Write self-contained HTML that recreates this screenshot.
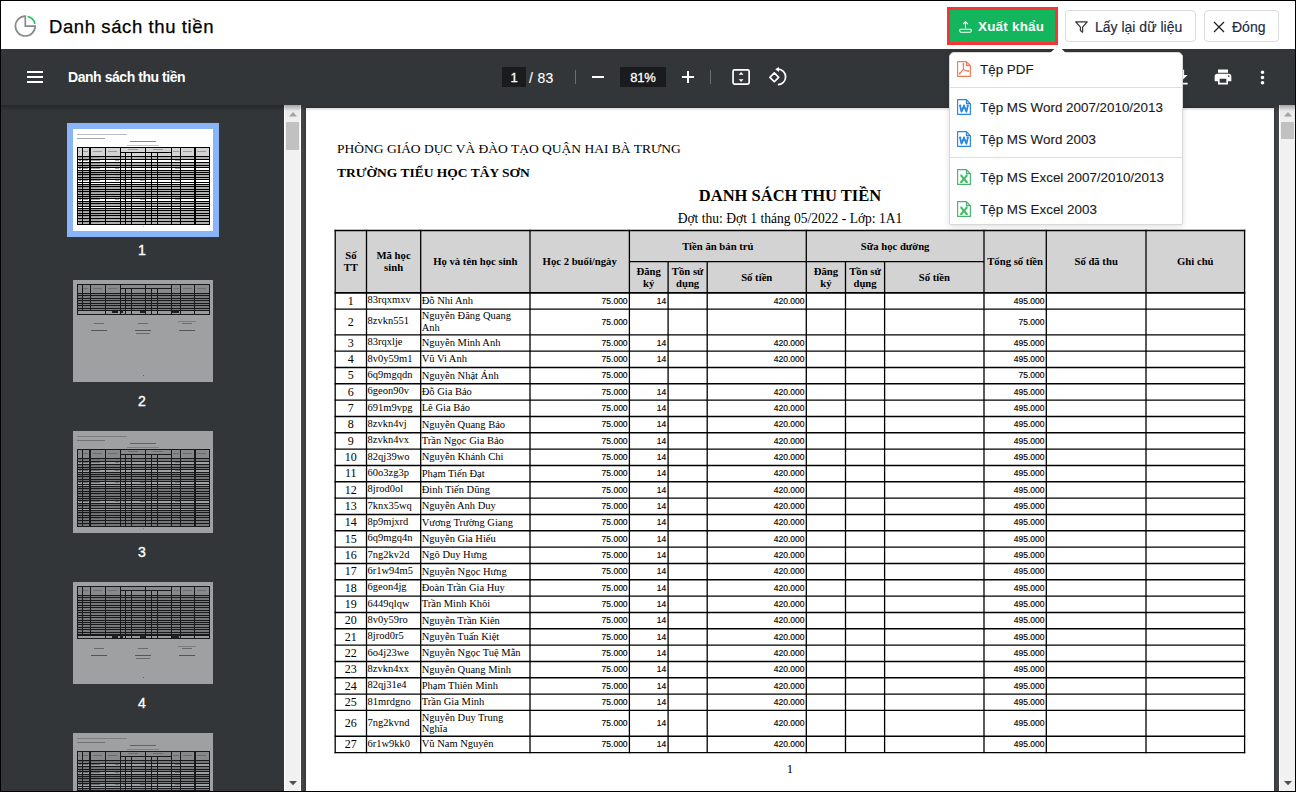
<!DOCTYPE html>
<html><head><meta charset="utf-8">
<style>
*{box-sizing:border-box;margin:0;padding:0}
html,body{width:1296px;height:792px;overflow:hidden;background:#fff}
body{position:relative;font-family:"Liberation Sans",sans-serif}
.abs{position:absolute}
#frame{position:absolute;left:0;top:0;width:1296px;height:792px;border:1px solid #000;z-index:50;pointer-events:none}
#hdr{position:absolute;left:1px;top:1px;width:1294px;height:48px;background:#fff}
#hdr .title{position:absolute;left:48px;top:14px;font-size:18.5px;letter-spacing:0.6px;color:#000;-webkit-text-stroke:0.25px #000;line-height:24px;white-space:nowrap}
.btn{position:absolute;top:10px;height:32px;border:1px solid #dcdcdc;border-radius:4px;background:#fff;color:#212121;font-size:14px;line-height:31px;white-space:nowrap;-webkit-text-stroke:0.15px #232a45}
#toolbar{position:absolute;left:1px;top:49px;width:1294px;height:56px;background:#323639;z-index:5}
#toolbar .t{position:absolute;color:#fff;white-space:nowrap}
#side{position:absolute;left:1px;top:105px;width:283px;height:686px;background:#323639}
#content{position:absolute;left:301px;top:105px;width:978px;height:686px;background:#434649}
#page{position:absolute;left:306px;top:108px;width:968px;height:683px;background:#fff;box-shadow:0 0 3px rgba(0,0,0,.5)}
#page div,.mini div,.thumb div{position:absolute}
.sb{position:absolute;background:#f1f1f1;border-left:1px solid #fff;border-right:1px solid #fff}
.th{display:flex;align-items:center;justify-content:center;text-align:center;font-family:"Liberation Serif",serif;font-weight:bold;font-size:10.7px;line-height:12px;color:#000}
.th.up{padding-bottom:2px}
.stt{display:flex;align-items:center;justify-content:center;padding-bottom:0.8px;font-family:"Liberation Serif",serif;font-size:12px;line-height:12px;color:#000}
.tl{display:flex;align-items:center;padding-left:1px;padding-bottom:0.8px;font-family:"Liberation Serif",serif;font-size:10.5px;line-height:10.6px;color:#000;white-space:nowrap}
.nr{display:flex;align-items:center;justify-content:flex-end;padding-right:1.8px;padding-bottom:0.8px;font-family:"Liberation Sans",sans-serif;font-size:8.5px;color:#000;white-space:nowrap;-webkit-text-stroke:0.15px #000}
.nm{line-height:11.3px}
.pt{font-family:"Liberation Serif",serif;color:#000;white-space:nowrap;line-height:1}
#dd{position:absolute;left:949px;top:52px;width:234px;height:173px;background:#fff;border:1px solid #d8d8d8;border-radius:5px 5px 2px 2px;box-shadow:0 2px 6px rgba(0,0,0,.12);z-index:20}
#dd .it{position:absolute;left:0;width:232px;height:32px;font-size:13.4px;color:#1a1a1a;white-space:nowrap;-webkit-text-stroke:0.1px #1a1a1a}
#dd .it span{position:absolute;left:30px;top:9px;line-height:16px}
#dd .it svg{position:absolute;left:7px;top:8px}
#dd .sep{position:absolute;left:0;width:232px;height:1px;background:#dddddd}
.thumb{position:absolute;left:72px;width:140px;height:102px;background:#fff;overflow:hidden}
.tlab{position:absolute;left:121px;width:40px;text-align:center;color:#fff;font-size:14px;line-height:14px;-webkit-text-stroke:0.35px #fff}
</style></head><body>
<div id="frame"></div>

<!-- HEADER -->
<div id="hdr">
  <svg class="abs" style="left:13px;top:13px" width="24" height="24" viewBox="0 0 24 24">
    <path d="M11.3 2.2 A9.9 9.9 0 1 0 21.2 12.1 L11.3 12.1 Z" fill="none" stroke="#8a8a8a" stroke-width="1.7"/>
    <path d="M13.6 2.5 A9.7 9.7 0 0 1 21 9.9" fill="none" stroke="#1cc45e" stroke-width="1.7"/>
  </svg>
  <div class="title">Danh sách thu tiền</div>
</div>

<!-- Export button -->
<div class="abs" style="left:947px;top:7px;width:111px;height:38px;background:#f73538;z-index:10"></div>
<div class="abs" style="left:950px;top:10px;width:105px;height:32px;background:#13b55d;z-index:11">
  <svg class="abs" style="left:8.5px;top:10.5px" width="13" height="12" viewBox="0 0 13 12">
    <path d="M6.5 0.8 L6.5 7.2 M4.2 3 L6.5 0.8 L8.8 3" fill="none" stroke="#fff" stroke-width="1.1"/>
    <path d="M1.2 8.2 H11.8 Q12.3 8.2 12.3 9.3 Q12.3 11.2 11.3 11.2 H1.7 Q0.7 11.2 0.7 9.3 Q0.7 8.2 1.2 8.2 Z" fill="none" stroke="#fff" stroke-width="1.1"/>
  </svg>
  <div class="abs" style="left:28px;top:8px;color:#fff;font-weight:bold;font-size:13.4px;line-height:18px;letter-spacing:0.25px;white-space:nowrap">Xuất khẩu</div>
</div>
<div class="btn" style="left:1065px;width:131px;z-index:10">
  <svg class="abs" style="left:9px;top:10px" width="13" height="12" viewBox="0 0 13 12">
    <path d="M0.8 0.8 H12.2 L7.6 6.2 V11.2 L5.4 9.6 V6.2 Z" fill="none" stroke="#333" stroke-width="1.2" stroke-linejoin="round"/>
  </svg>
  <span class="abs" style="left:29px;top:1px;color:#232a45">Lấy lại dữ liệu</span>
</div>
<div class="btn" style="left:1204px;width:75px;z-index:10">
  <svg class="abs" style="left:8px;top:10px" width="12" height="12" viewBox="0 0 12 12">
    <path d="M1 1 L11 11 M11 1 L1 11" fill="none" stroke="#222" stroke-width="1.3"/>
  </svg>
  <span class="abs" style="left:27px;top:1px;color:#232a45">Đóng</span>
</div>

<!-- TOOLBAR -->
<div id="toolbar">
  <div class="abs" style="left:26px;top:22px;width:16px;height:2px;background:#fff"></div>
  <div class="abs" style="left:26px;top:27px;width:16px;height:2px;background:#fff"></div>
  <div class="abs" style="left:26px;top:32px;width:16px;height:2px;background:#fff"></div>
  <div class="t" style="left:67px;top:19px;font-size:14px;font-weight:bold;letter-spacing:-0.45px;line-height:18px">Danh sách thu tiền</div>

  <div class="abs" style="left:501px;top:18px;width:24px;height:20px;background:#191b1c"></div>
  <div class="t" style="left:501px;top:20px;width:24px;text-align:center;font-size:13px;line-height:18px;-webkit-text-stroke:0.3px #fff">1</div>
  <div class="t" style="left:528px;top:20px;font-size:14px;line-height:18px;letter-spacing:0.3px;-webkit-text-stroke:0.1px #fff">/ 83</div>
  <div class="abs" style="left:574px;top:21px;width:1px;height:14px;background:#6d7073"></div>
  <div class="abs" style="left:591px;top:27px;width:12px;height:2px;background:#fff"></div>
  <div class="abs" style="left:619px;top:18px;width:46px;height:20px;background:#191b1c"></div>
  <div class="t" style="left:619px;top:20px;width:46px;text-align:center;font-size:13px;line-height:18px;letter-spacing:-0.2px;-webkit-text-stroke:0.3px #fff">81%</div>
  <div class="abs" style="left:681px;top:27px;width:12px;height:2px;background:#fff"></div>
  <div class="abs" style="left:686px;top:22px;width:2px;height:12px;background:#fff"></div>
  <div class="abs" style="left:709px;top:21px;width:1px;height:14px;background:#6d7073"></div>
  <svg class="abs" style="left:730px;top:19px" width="20" height="18" viewBox="0 0 20 18">
    <rect x="2.05" y="1.95" width="16.1" height="14.1" rx="1.6" fill="none" stroke="#fff" stroke-width="1.7"/>
    <path d="M10.1 3.9 L12.5 6.7 H7.7 Z M10.1 14.1 L12.5 11.3 H7.7 Z" fill="#fff"/>
  </svg>
  <svg class="abs" style="left:766px;top:17px" width="22" height="22" viewBox="0 0 22 22">
    <path d="M2.9 11.35 L7.3 6.95 L11.7 11.35 L7.3 15.75 Z" fill="none" stroke="#fff" stroke-width="1.7" stroke-linejoin="round"/>
    <path d="M10.9 3.2 A7.7 7.7 0 0 1 10.9 18.6" fill="none" stroke="#fff" stroke-width="1.7"/>
    <path d="M8.2 3.3 L11.9 0.9 L11.9 5.9 Z" fill="#fff"/>
  </svg>
  <!-- download (partly hidden) -->
  <svg class="abs" style="left:1170.4px;top:17.5px" width="21" height="21" viewBox="0 0 24 24"><path d="M19 9h-4V3H9v6H5l7 7 7-7zM5 18v2h14v-2H5z" fill="#fff"/></svg>
  <svg class="abs" style="left:1211.8px;top:18px" width="20" height="20" viewBox="0 0 24 24"><path d="M19 8H5c-1.66 0-3 1.34-3 3v6h4v4h12v-4h4v-6c0-1.660-1.34-3-3-3zm-3 11H8v-5h8v5zm3-7c-.55 0-1-.45-1-1s.45-1 1-1 1 .45 1 1-.45 1-1 1zm-1-9H6v4h12V3z" fill="#fff"/></svg>
  <svg class="abs" style="left:1250.8px;top:17.5px" width="21" height="21" viewBox="0 0 24 24"><path d="M12 8c1.1 0 2-.9 2-2s-.9-2-2-2-2 .9-2 2 .9 2 2 2zm0 2c-1.1 0-2 .9-2 2s.9 2 2 2 2-.9 2-2-.9-2-2-2zm0 6c-1.1 0-2 .9-2 2s.9 2 2 2 2-.9 2-2-.9-2-2-2z" fill="#fff"/></svg>
</div>

<!-- SIDEBAR -->
<div id="side">
<div class="abs" style="left:66px;top:18px;width:152px;height:114px;background:#8ab4f8"></div>
<div class="thumb" style="top:24px"><div style="left:4.48px;top:5.44px;width:49.32px;height:1.00px;background:#bdbdbd"></div><div style="left:4.48px;top:8.82px;width:27.62px;height:1.00px;background:#a6a6a6"></div><div style="left:56.84px;top:12.20px;width:26.32px;height:1.20px;background:#888"></div><div style="left:53.95px;top:15.73px;width:31.82px;height:1.00px;background:#c4c4c4"></div><div style="left:4.22px;top:18.01px;width:131.52px;height:9.16px;background:#d3d3d3"></div><div style="left:4.22px;top:27.17px;width:131.52px;height:2.40px;background:#b0b0b0"></div><div style="left:4.22px;top:33.34px;width:131.52px;height:2.40px;background:#b0b0b0"></div><div style="left:4.22px;top:35.74px;width:131.52px;height:2.40px;background:#b0b0b0"></div><div style="left:4.22px;top:40.55px;width:131.52px;height:2.40px;background:#b0b0b0"></div><div style="left:4.22px;top:42.95px;width:131.52px;height:2.40px;background:#b0b0b0"></div><div style="left:4.22px;top:45.35px;width:131.52px;height:2.40px;background:#b0b0b0"></div><div style="left:4.22px;top:47.75px;width:131.52px;height:2.40px;background:#b0b0b0"></div><div style="left:4.22px;top:54.95px;width:131.52px;height:2.40px;background:#b0b0b0"></div><div style="left:4.22px;top:57.35px;width:131.52px;height:2.40px;background:#b0b0b0"></div><div style="left:4.22px;top:59.75px;width:131.52px;height:2.40px;background:#b0b0b0"></div><div style="left:4.22px;top:62.15px;width:131.52px;height:2.40px;background:#b0b0b0"></div><div style="left:4.22px;top:64.55px;width:131.52px;height:2.40px;background:#b0b0b0"></div><div style="left:4.22px;top:66.95px;width:131.52px;height:2.40px;background:#b0b0b0"></div><div style="left:4.22px;top:71.75px;width:131.52px;height:2.40px;background:#b0b0b0"></div><div style="left:4.22px;top:74.15px;width:131.52px;height:2.40px;background:#b0b0b0"></div><div style="left:4.22px;top:78.95px;width:131.52px;height:2.40px;background:#b0b0b0"></div><div style="left:4.22px;top:81.35px;width:131.52px;height:2.40px;background:#b0b0b0"></div><div style="left:4.22px;top:83.75px;width:131.52px;height:2.40px;background:#b0b0b0"></div><div style="left:4.22px;top:86.16px;width:131.52px;height:2.40px;background:#b0b0b0"></div><div style="left:4.22px;top:88.56px;width:131.52px;height:3.81px;background:#b0b0b0"></div><div style="left:4.22px;top:92.36px;width:131.52px;height:2.40px;background:#b0b0b0"></div><div style="left:5.72px;top:22.20px;width:1.53px;height:1.30px;background:#9a9a9a"></div><div style="left:10.25px;top:22.20px;width:4.84px;height:1.30px;background:#9a9a9a"></div><div style="left:19.99px;top:22.20px;width:9.00px;height:1.30px;background:#9a9a9a"></div><div style="left:35.08px;top:22.20px;width:9.00px;height:1.30px;background:#9a9a9a"></div><div style="left:99.56px;top:22.20px;width:6.01px;height:1.30px;background:#9a9a9a"></div><div style="left:109.78px;top:22.20px;width:9.00px;height:1.30px;background:#9a9a9a"></div><div style="left:124.12px;top:22.20px;width:9.00px;height:1.30px;background:#9a9a9a"></div><div style="left:54.57px;top:19.99px;width:10.00px;height:1.20px;background:#9a9a9a"></div><div style="left:80.21px;top:19.99px;width:10.00px;height:1.20px;background:#9a9a9a"></div><div style="left:5.72px;top:27.87px;width:2.00px;height:1.20px;background:#888"></div><div style="left:9.25px;top:27.87px;width:6.00px;height:1.20px;background:#999"></div><div style="left:17.09px;top:27.87px;width:10.00px;height:1.20px;background:#999"></div><div style="left:42.27px;top:27.87px;width:4.00px;height:1.20px;background:#aaa"></div><div style="left:50.37px;top:27.87px;width:1.50px;height:1.20px;background:#aaa"></div><div style="left:67.36px;top:27.87px;width:4.50px;height:1.20px;background:#aaa"></div><div style="left:102.07px;top:27.87px;width:4.50px;height:1.20px;background:#aaa"></div><div style="left:5.72px;top:30.96px;width:2.00px;height:1.20px;background:#888"></div><div style="left:9.25px;top:30.96px;width:6.00px;height:1.20px;background:#999"></div><div style="left:17.09px;top:30.96px;width:10.00px;height:1.20px;background:#999"></div><div style="left:42.27px;top:30.96px;width:4.00px;height:1.20px;background:#aaa"></div><div style="left:102.07px;top:30.96px;width:4.50px;height:1.20px;background:#aaa"></div><div style="left:5.72px;top:34.04px;width:2.00px;height:1.20px;background:#888"></div><div style="left:9.25px;top:34.04px;width:6.00px;height:1.20px;background:#999"></div><div style="left:17.09px;top:34.04px;width:10.00px;height:1.20px;background:#999"></div><div style="left:42.27px;top:34.04px;width:4.00px;height:1.20px;background:#aaa"></div><div style="left:50.37px;top:34.04px;width:1.50px;height:1.20px;background:#aaa"></div><div style="left:67.36px;top:34.04px;width:4.50px;height:1.20px;background:#aaa"></div><div style="left:102.07px;top:34.04px;width:4.50px;height:1.20px;background:#aaa"></div><div style="left:5.72px;top:36.44px;width:2.00px;height:1.20px;background:#888"></div><div style="left:9.25px;top:36.44px;width:6.00px;height:1.20px;background:#999"></div><div style="left:17.09px;top:36.44px;width:10.00px;height:1.20px;background:#999"></div><div style="left:42.27px;top:36.44px;width:4.00px;height:1.20px;background:#aaa"></div><div style="left:50.37px;top:36.44px;width:1.50px;height:1.20px;background:#aaa"></div><div style="left:67.36px;top:36.44px;width:4.50px;height:1.20px;background:#aaa"></div><div style="left:102.07px;top:36.44px;width:4.50px;height:1.20px;background:#aaa"></div><div style="left:5.72px;top:38.85px;width:2.00px;height:1.20px;background:#888"></div><div style="left:9.25px;top:38.85px;width:6.00px;height:1.20px;background:#999"></div><div style="left:17.09px;top:38.85px;width:10.00px;height:1.20px;background:#999"></div><div style="left:42.27px;top:38.85px;width:4.00px;height:1.20px;background:#aaa"></div><div style="left:102.07px;top:38.85px;width:4.50px;height:1.20px;background:#aaa"></div><div style="left:5.72px;top:41.25px;width:2.00px;height:1.20px;background:#888"></div><div style="left:9.25px;top:41.25px;width:6.00px;height:1.20px;background:#999"></div><div style="left:17.09px;top:41.25px;width:10.00px;height:1.20px;background:#999"></div><div style="left:42.27px;top:41.25px;width:4.00px;height:1.20px;background:#aaa"></div><div style="left:50.37px;top:41.25px;width:1.50px;height:1.20px;background:#aaa"></div><div style="left:67.36px;top:41.25px;width:4.50px;height:1.20px;background:#aaa"></div><div style="left:102.07px;top:41.25px;width:4.50px;height:1.20px;background:#aaa"></div><div style="left:5.72px;top:43.65px;width:2.00px;height:1.20px;background:#888"></div><div style="left:9.25px;top:43.65px;width:6.00px;height:1.20px;background:#999"></div><div style="left:17.09px;top:43.65px;width:10.00px;height:1.20px;background:#999"></div><div style="left:42.27px;top:43.65px;width:4.00px;height:1.20px;background:#aaa"></div><div style="left:50.37px;top:43.65px;width:1.50px;height:1.20px;background:#aaa"></div><div style="left:67.36px;top:43.65px;width:4.50px;height:1.20px;background:#aaa"></div><div style="left:102.07px;top:43.65px;width:4.50px;height:1.20px;background:#aaa"></div><div style="left:5.72px;top:46.05px;width:2.00px;height:1.20px;background:#888"></div><div style="left:9.25px;top:46.05px;width:6.00px;height:1.20px;background:#999"></div><div style="left:17.09px;top:46.05px;width:10.00px;height:1.20px;background:#999"></div><div style="left:42.27px;top:46.05px;width:4.00px;height:1.20px;background:#aaa"></div><div style="left:50.37px;top:46.05px;width:1.50px;height:1.20px;background:#aaa"></div><div style="left:67.36px;top:46.05px;width:4.50px;height:1.20px;background:#aaa"></div><div style="left:102.07px;top:46.05px;width:4.50px;height:1.20px;background:#aaa"></div><div style="left:5.72px;top:48.45px;width:2.00px;height:1.20px;background:#888"></div><div style="left:9.25px;top:48.45px;width:6.00px;height:1.20px;background:#999"></div><div style="left:17.09px;top:48.45px;width:10.00px;height:1.20px;background:#999"></div><div style="left:42.27px;top:48.45px;width:4.00px;height:1.20px;background:#aaa"></div><div style="left:50.37px;top:48.45px;width:1.50px;height:1.20px;background:#aaa"></div><div style="left:67.36px;top:48.45px;width:4.50px;height:1.20px;background:#aaa"></div><div style="left:102.07px;top:48.45px;width:4.50px;height:1.20px;background:#aaa"></div><div style="left:5.72px;top:50.85px;width:2.00px;height:1.20px;background:#888"></div><div style="left:9.25px;top:50.85px;width:6.00px;height:1.20px;background:#999"></div><div style="left:17.09px;top:50.85px;width:10.00px;height:1.20px;background:#999"></div><div style="left:42.27px;top:50.85px;width:4.00px;height:1.20px;background:#aaa"></div><div style="left:50.37px;top:50.85px;width:1.50px;height:1.20px;background:#aaa"></div><div style="left:67.36px;top:50.85px;width:4.50px;height:1.20px;background:#aaa"></div><div style="left:102.07px;top:50.85px;width:4.50px;height:1.20px;background:#aaa"></div><div style="left:5.72px;top:53.25px;width:2.00px;height:1.20px;background:#888"></div><div style="left:9.25px;top:53.25px;width:6.00px;height:1.20px;background:#999"></div><div style="left:17.09px;top:53.25px;width:10.00px;height:1.20px;background:#999"></div><div style="left:42.27px;top:53.25px;width:4.00px;height:1.20px;background:#aaa"></div><div style="left:50.37px;top:53.25px;width:1.50px;height:1.20px;background:#aaa"></div><div style="left:67.36px;top:53.25px;width:4.50px;height:1.20px;background:#aaa"></div><div style="left:102.07px;top:53.25px;width:4.50px;height:1.20px;background:#aaa"></div><div style="left:5.72px;top:55.65px;width:2.00px;height:1.20px;background:#888"></div><div style="left:9.25px;top:55.65px;width:6.00px;height:1.20px;background:#999"></div><div style="left:17.09px;top:55.65px;width:10.00px;height:1.20px;background:#999"></div><div style="left:42.27px;top:55.65px;width:4.00px;height:1.20px;background:#aaa"></div><div style="left:50.37px;top:55.65px;width:1.50px;height:1.20px;background:#aaa"></div><div style="left:67.36px;top:55.65px;width:4.50px;height:1.20px;background:#aaa"></div><div style="left:102.07px;top:55.65px;width:4.50px;height:1.20px;background:#aaa"></div><div style="left:5.72px;top:58.05px;width:2.00px;height:1.20px;background:#888"></div><div style="left:9.25px;top:58.05px;width:6.00px;height:1.20px;background:#999"></div><div style="left:17.09px;top:58.05px;width:10.00px;height:1.20px;background:#999"></div><div style="left:42.27px;top:58.05px;width:4.00px;height:1.20px;background:#aaa"></div><div style="left:50.37px;top:58.05px;width:1.50px;height:1.20px;background:#aaa"></div><div style="left:67.36px;top:58.05px;width:4.50px;height:1.20px;background:#aaa"></div><div style="left:102.07px;top:58.05px;width:4.50px;height:1.20px;background:#aaa"></div><div style="left:5.72px;top:60.45px;width:2.00px;height:1.20px;background:#888"></div><div style="left:9.25px;top:60.45px;width:6.00px;height:1.20px;background:#999"></div><div style="left:17.09px;top:60.45px;width:10.00px;height:1.20px;background:#999"></div><div style="left:42.27px;top:60.45px;width:4.00px;height:1.20px;background:#aaa"></div><div style="left:50.37px;top:60.45px;width:1.50px;height:1.20px;background:#aaa"></div><div style="left:67.36px;top:60.45px;width:4.50px;height:1.20px;background:#aaa"></div><div style="left:102.07px;top:60.45px;width:4.50px;height:1.20px;background:#aaa"></div><div style="left:5.72px;top:62.85px;width:2.00px;height:1.20px;background:#888"></div><div style="left:9.25px;top:62.85px;width:6.00px;height:1.20px;background:#999"></div><div style="left:17.09px;top:62.85px;width:10.00px;height:1.20px;background:#999"></div><div style="left:42.27px;top:62.85px;width:4.00px;height:1.20px;background:#aaa"></div><div style="left:50.37px;top:62.85px;width:1.50px;height:1.20px;background:#aaa"></div><div style="left:67.36px;top:62.85px;width:4.50px;height:1.20px;background:#aaa"></div><div style="left:102.07px;top:62.85px;width:4.50px;height:1.20px;background:#aaa"></div><div style="left:5.72px;top:65.25px;width:2.00px;height:1.20px;background:#888"></div><div style="left:9.25px;top:65.25px;width:6.00px;height:1.20px;background:#999"></div><div style="left:17.09px;top:65.25px;width:10.00px;height:1.20px;background:#999"></div><div style="left:42.27px;top:65.25px;width:4.00px;height:1.20px;background:#aaa"></div><div style="left:50.37px;top:65.25px;width:1.50px;height:1.20px;background:#aaa"></div><div style="left:67.36px;top:65.25px;width:4.50px;height:1.20px;background:#aaa"></div><div style="left:102.07px;top:65.25px;width:4.50px;height:1.20px;background:#aaa"></div><div style="left:5.72px;top:67.65px;width:2.00px;height:1.20px;background:#888"></div><div style="left:9.25px;top:67.65px;width:6.00px;height:1.20px;background:#999"></div><div style="left:17.09px;top:67.65px;width:10.00px;height:1.20px;background:#999"></div><div style="left:42.27px;top:67.65px;width:4.00px;height:1.20px;background:#aaa"></div><div style="left:50.37px;top:67.65px;width:1.50px;height:1.20px;background:#aaa"></div><div style="left:67.36px;top:67.65px;width:4.50px;height:1.20px;background:#aaa"></div><div style="left:102.07px;top:67.65px;width:4.50px;height:1.20px;background:#aaa"></div><div style="left:5.72px;top:70.05px;width:2.00px;height:1.20px;background:#888"></div><div style="left:9.25px;top:70.05px;width:6.00px;height:1.20px;background:#999"></div><div style="left:17.09px;top:70.05px;width:10.00px;height:1.20px;background:#999"></div><div style="left:42.27px;top:70.05px;width:4.00px;height:1.20px;background:#aaa"></div><div style="left:50.37px;top:70.05px;width:1.50px;height:1.20px;background:#aaa"></div><div style="left:67.36px;top:70.05px;width:4.50px;height:1.20px;background:#aaa"></div><div style="left:102.07px;top:70.05px;width:4.50px;height:1.20px;background:#aaa"></div><div style="left:5.72px;top:72.45px;width:2.00px;height:1.20px;background:#888"></div><div style="left:9.25px;top:72.45px;width:6.00px;height:1.20px;background:#999"></div><div style="left:17.09px;top:72.45px;width:10.00px;height:1.20px;background:#999"></div><div style="left:42.27px;top:72.45px;width:4.00px;height:1.20px;background:#aaa"></div><div style="left:50.37px;top:72.45px;width:1.50px;height:1.20px;background:#aaa"></div><div style="left:67.36px;top:72.45px;width:4.50px;height:1.20px;background:#aaa"></div><div style="left:102.07px;top:72.45px;width:4.50px;height:1.20px;background:#aaa"></div><div style="left:5.72px;top:74.85px;width:2.00px;height:1.20px;background:#888"></div><div style="left:9.25px;top:74.85px;width:6.00px;height:1.20px;background:#999"></div><div style="left:17.09px;top:74.85px;width:10.00px;height:1.20px;background:#999"></div><div style="left:42.27px;top:74.85px;width:4.00px;height:1.20px;background:#aaa"></div><div style="left:50.37px;top:74.85px;width:1.50px;height:1.20px;background:#aaa"></div><div style="left:67.36px;top:74.85px;width:4.50px;height:1.20px;background:#aaa"></div><div style="left:102.07px;top:74.85px;width:4.50px;height:1.20px;background:#aaa"></div><div style="left:5.72px;top:77.25px;width:2.00px;height:1.20px;background:#888"></div><div style="left:9.25px;top:77.25px;width:6.00px;height:1.20px;background:#999"></div><div style="left:17.09px;top:77.25px;width:10.00px;height:1.20px;background:#999"></div><div style="left:42.27px;top:77.25px;width:4.00px;height:1.20px;background:#aaa"></div><div style="left:50.37px;top:77.25px;width:1.50px;height:1.20px;background:#aaa"></div><div style="left:67.36px;top:77.25px;width:4.50px;height:1.20px;background:#aaa"></div><div style="left:102.07px;top:77.25px;width:4.50px;height:1.20px;background:#aaa"></div><div style="left:5.72px;top:79.65px;width:2.00px;height:1.20px;background:#888"></div><div style="left:9.25px;top:79.65px;width:6.00px;height:1.20px;background:#999"></div><div style="left:17.09px;top:79.65px;width:10.00px;height:1.20px;background:#999"></div><div style="left:42.27px;top:79.65px;width:4.00px;height:1.20px;background:#aaa"></div><div style="left:50.37px;top:79.65px;width:1.50px;height:1.20px;background:#aaa"></div><div style="left:67.36px;top:79.65px;width:4.50px;height:1.20px;background:#aaa"></div><div style="left:102.07px;top:79.65px;width:4.50px;height:1.20px;background:#aaa"></div><div style="left:5.72px;top:82.05px;width:2.00px;height:1.20px;background:#888"></div><div style="left:9.25px;top:82.05px;width:6.00px;height:1.20px;background:#999"></div><div style="left:17.09px;top:82.05px;width:10.00px;height:1.20px;background:#999"></div><div style="left:42.27px;top:82.05px;width:4.00px;height:1.20px;background:#aaa"></div><div style="left:50.37px;top:82.05px;width:1.50px;height:1.20px;background:#aaa"></div><div style="left:67.36px;top:82.05px;width:4.50px;height:1.20px;background:#aaa"></div><div style="left:102.07px;top:82.05px;width:4.50px;height:1.20px;background:#aaa"></div><div style="left:5.72px;top:84.45px;width:2.00px;height:1.20px;background:#888"></div><div style="left:9.25px;top:84.45px;width:6.00px;height:1.20px;background:#999"></div><div style="left:17.09px;top:84.45px;width:10.00px;height:1.20px;background:#999"></div><div style="left:42.27px;top:84.45px;width:4.00px;height:1.20px;background:#aaa"></div><div style="left:50.37px;top:84.45px;width:1.50px;height:1.20px;background:#aaa"></div><div style="left:67.36px;top:84.45px;width:4.50px;height:1.20px;background:#aaa"></div><div style="left:102.07px;top:84.45px;width:4.50px;height:1.20px;background:#aaa"></div><div style="left:5.72px;top:86.86px;width:2.00px;height:1.20px;background:#888"></div><div style="left:9.25px;top:86.86px;width:6.00px;height:1.20px;background:#999"></div><div style="left:17.09px;top:86.86px;width:10.00px;height:1.20px;background:#999"></div><div style="left:42.27px;top:86.86px;width:4.00px;height:1.20px;background:#aaa"></div><div style="left:50.37px;top:86.86px;width:1.50px;height:1.20px;background:#aaa"></div><div style="left:67.36px;top:86.86px;width:4.50px;height:1.20px;background:#aaa"></div><div style="left:102.07px;top:86.86px;width:4.50px;height:1.20px;background:#aaa"></div><div style="left:5.72px;top:89.96px;width:2.00px;height:1.20px;background:#888"></div><div style="left:9.25px;top:89.96px;width:6.00px;height:1.20px;background:#999"></div><div style="left:17.09px;top:89.96px;width:10.00px;height:1.20px;background:#999"></div><div style="left:42.27px;top:89.96px;width:4.00px;height:1.20px;background:#aaa"></div><div style="left:50.37px;top:89.96px;width:1.50px;height:1.20px;background:#aaa"></div><div style="left:67.36px;top:89.96px;width:4.50px;height:1.20px;background:#aaa"></div><div style="left:102.07px;top:89.96px;width:4.50px;height:1.20px;background:#aaa"></div><div style="left:5.72px;top:93.06px;width:2.00px;height:1.20px;background:#888"></div><div style="left:9.25px;top:93.06px;width:6.00px;height:1.20px;background:#999"></div><div style="left:17.09px;top:93.06px;width:10.00px;height:1.20px;background:#999"></div><div style="left:42.27px;top:93.06px;width:4.00px;height:1.20px;background:#aaa"></div><div style="left:50.37px;top:93.06px;width:1.50px;height:1.20px;background:#aaa"></div><div style="left:67.36px;top:93.06px;width:4.50px;height:1.20px;background:#aaa"></div><div style="left:102.07px;top:93.06px;width:4.50px;height:1.20px;background:#aaa"></div><div style="left:4.22px;top:18.01px;width:132.52px;height:1.00px;background:#000"></div><div style="left:46.77px;top:22.59px;width:51.29px;height:1.00px;background:#000"></div><div style="left:4.22px;top:27.17px;width:132.52px;height:1.00px;background:#000"></div><div style="left:4.22px;top:29.57px;width:132.52px;height:1.00px;background:#000"></div><div style="left:4.22px;top:33.34px;width:132.52px;height:1.00px;background:#000"></div><div style="left:4.22px;top:35.74px;width:132.52px;height:1.00px;background:#000"></div><div style="left:4.22px;top:38.15px;width:132.52px;height:1.00px;background:#000"></div><div style="left:4.22px;top:40.55px;width:132.52px;height:1.00px;background:#000"></div><div style="left:4.22px;top:42.95px;width:132.52px;height:1.00px;background:#000"></div><div style="left:4.22px;top:45.35px;width:132.52px;height:1.00px;background:#000"></div><div style="left:4.22px;top:47.75px;width:132.52px;height:1.00px;background:#000"></div><div style="left:4.22px;top:50.15px;width:132.52px;height:1.00px;background:#000"></div><div style="left:4.22px;top:52.55px;width:132.52px;height:1.00px;background:#000"></div><div style="left:4.22px;top:54.95px;width:132.52px;height:1.00px;background:#000"></div><div style="left:4.22px;top:57.35px;width:132.52px;height:1.00px;background:#000"></div><div style="left:4.22px;top:59.75px;width:132.52px;height:1.00px;background:#000"></div><div style="left:4.22px;top:62.15px;width:132.52px;height:1.00px;background:#000"></div><div style="left:4.22px;top:64.55px;width:132.52px;height:1.00px;background:#000"></div><div style="left:4.22px;top:66.95px;width:132.52px;height:1.00px;background:#000"></div><div style="left:4.22px;top:69.35px;width:132.52px;height:1.00px;background:#000"></div><div style="left:4.22px;top:71.75px;width:132.52px;height:1.00px;background:#000"></div><div style="left:4.22px;top:74.15px;width:132.52px;height:1.00px;background:#000"></div><div style="left:4.22px;top:76.55px;width:132.52px;height:1.00px;background:#000"></div><div style="left:4.22px;top:78.95px;width:132.52px;height:1.00px;background:#000"></div><div style="left:4.22px;top:81.35px;width:132.52px;height:1.00px;background:#000"></div><div style="left:4.22px;top:83.75px;width:132.52px;height:1.00px;background:#000"></div><div style="left:4.22px;top:86.16px;width:132.52px;height:1.00px;background:#000"></div><div style="left:4.22px;top:88.56px;width:132.52px;height:1.00px;background:#000"></div><div style="left:4.22px;top:92.36px;width:132.52px;height:1.00px;background:#000"></div><div style="left:4.22px;top:94.76px;width:132.52px;height:1.00px;background:#000"></div><div style="left:4.12px;top:18.01px;width:1.20px;height:77.76px;background:#000"></div><div style="left:8.65px;top:18.01px;width:1.20px;height:77.76px;background:#000"></div><div style="left:16.49px;top:18.01px;width:1.20px;height:77.76px;background:#000"></div><div style="left:32.30px;top:18.01px;width:1.20px;height:77.76px;background:#000"></div><div style="left:46.67px;top:18.01px;width:1.20px;height:77.76px;background:#000"></div><div style="left:52.37px;top:22.59px;width:1.00px;height:73.17px;background:#000"></div><div style="left:58.02px;top:22.59px;width:1.00px;height:73.17px;background:#000"></div><div style="left:72.26px;top:18.01px;width:1.20px;height:77.76px;background:#000"></div><div style="left:78.03px;top:22.59px;width:1.00px;height:73.17px;background:#000"></div><div style="left:83.68px;top:22.59px;width:1.00px;height:73.17px;background:#000"></div><div style="left:97.96px;top:18.01px;width:1.20px;height:77.76px;background:#000"></div><div style="left:106.97px;top:18.01px;width:1.20px;height:77.76px;background:#000"></div><div style="left:121.39px;top:18.01px;width:1.20px;height:77.76px;background:#000"></div><div style="left:135.65px;top:18.01px;width:1.20px;height:77.76px;background:#000"></div><div style="left:69.71px;top:96.73px;width:1.00px;height:1.20px;background:#bbb"></div></div>
<div class="tlab" style="top:138px">1</div>
<div class="thumb" style="top:175px"><div style="left:4.22px;top:4.20px;width:131.52px;height:8.80px;background:#d3d3d3"></div><div style="left:4.22px;top:13.00px;width:131.52px;height:17.00px;background:#b4b4b4"></div><div style="left:4.22px;top:30.00px;width:131.52px;height:3.60px;background:#f4f4f4"></div><div style="left:10.25px;top:8.00px;width:4.84px;height:1.30px;background:#a0a0a0"></div><div style="left:19.99px;top:8.00px;width:9.00px;height:1.30px;background:#a0a0a0"></div><div style="left:35.08px;top:8.00px;width:9.00px;height:1.30px;background:#a0a0a0"></div><div style="left:99.56px;top:8.00px;width:6.01px;height:1.30px;background:#a0a0a0"></div><div style="left:109.78px;top:8.00px;width:9.00px;height:1.30px;background:#a0a0a0"></div><div style="left:124.12px;top:8.00px;width:9.00px;height:1.30px;background:#a0a0a0"></div><div style="left:4.22px;top:13.00px;width:132.52px;height:1.00px;background:#000"></div><div style="left:4.22px;top:15.45px;width:132.52px;height:1.00px;background:#000"></div><div style="left:4.22px;top:17.90px;width:132.52px;height:1.00px;background:#000"></div><div style="left:4.22px;top:20.35px;width:132.52px;height:1.00px;background:#000"></div><div style="left:4.22px;top:22.80px;width:132.52px;height:1.00px;background:#000"></div><div style="left:4.22px;top:25.25px;width:132.52px;height:1.00px;background:#000"></div><div style="left:4.22px;top:27.70px;width:132.52px;height:1.00px;background:#000"></div><div style="left:4.22px;top:4.20px;width:132.52px;height:1.00px;background:#000"></div><div style="left:4.22px;top:30.00px;width:132.52px;height:1.00px;background:#000"></div><div style="left:4.22px;top:33.60px;width:132.52px;height:1.00px;background:#000"></div><div style="left:46.77px;top:8.20px;width:51.29px;height:1.00px;background:#000"></div><div style="left:4.22px;top:4.20px;width:1.00px;height:30.40px;background:#000"></div><div style="left:8.75px;top:4.20px;width:1.00px;height:25.80px;background:#000"></div><div style="left:16.59px;top:4.20px;width:1.00px;height:25.80px;background:#000"></div><div style="left:32.40px;top:4.20px;width:1.00px;height:30.40px;background:#000"></div><div style="left:46.77px;top:4.20px;width:1.00px;height:30.40px;background:#000"></div><div style="left:52.37px;top:8.20px;width:1.00px;height:26.40px;background:#000"></div><div style="left:58.02px;top:8.20px;width:1.00px;height:26.40px;background:#000"></div><div style="left:72.36px;top:4.20px;width:1.00px;height:30.40px;background:#000"></div><div style="left:78.03px;top:8.20px;width:1.00px;height:26.40px;background:#000"></div><div style="left:83.68px;top:8.20px;width:1.00px;height:26.40px;background:#000"></div><div style="left:98.06px;top:4.20px;width:1.00px;height:30.40px;background:#000"></div><div style="left:107.07px;top:4.20px;width:1.00px;height:30.40px;background:#000"></div><div style="left:121.49px;top:4.20px;width:1.00px;height:30.40px;background:#000"></div><div style="left:135.75px;top:4.20px;width:1.00px;height:30.40px;background:#000"></div><div style="left:39.40px;top:30.60px;width:6.00px;height:2.80px;background:#111"></div><div style="left:47.27px;top:30.60px;width:3.00px;height:2.80px;background:#111"></div><div style="left:67.02px;top:30.60px;width:5.00px;height:2.80px;background:#111"></div><div style="left:98.56px;top:30.60px;width:7.00px;height:2.80px;background:#111"></div><div style="left:21.20px;top:43.40px;width:10.00px;height:1.00px;background:#9a9a9a"></div><div style="left:18.20px;top:50.00px;width:16.00px;height:1.00px;background:#707070"></div><div style="left:65.00px;top:43.40px;width:10.00px;height:1.00px;background:#9a9a9a"></div><div style="left:62.00px;top:50.00px;width:16.00px;height:1.00px;background:#707070"></div><div style="left:109.00px;top:43.40px;width:10.00px;height:1.00px;background:#9a9a9a"></div><div style="left:106.00px;top:50.00px;width:16.00px;height:1.00px;background:#707070"></div><div style="left:63.00px;top:53.00px;width:14.00px;height:0.80px;background:#999"></div><div style="left:105.00px;top:40.60px;width:18.00px;height:0.60px;background:#bbb"></div><div style="left:69.50px;top:94.50px;width:1.00px;height:1.00px;background:#777"></div><div style="left:0;top:0;width:140px;height:102px;background:rgba(50,54,57,.47)"></div></div>
<div class="tlab" style="top:289px">2</div>
<div class="thumb" style="top:326px"><div style="left:4.48px;top:5.44px;width:49.32px;height:1.00px;background:#bdbdbd"></div><div style="left:4.48px;top:8.82px;width:27.62px;height:1.00px;background:#a6a6a6"></div><div style="left:56.84px;top:12.20px;width:26.32px;height:1.20px;background:#888"></div><div style="left:53.95px;top:15.73px;width:31.82px;height:1.00px;background:#c4c4c4"></div><div style="left:4.22px;top:18.01px;width:131.52px;height:9.16px;background:#d3d3d3"></div><div style="left:4.22px;top:27.17px;width:131.52px;height:2.40px;background:#b0b0b0"></div><div style="left:4.22px;top:33.34px;width:131.52px;height:2.40px;background:#b0b0b0"></div><div style="left:4.22px;top:35.74px;width:131.52px;height:2.40px;background:#b0b0b0"></div><div style="left:4.22px;top:40.55px;width:131.52px;height:2.40px;background:#b0b0b0"></div><div style="left:4.22px;top:42.95px;width:131.52px;height:2.40px;background:#b0b0b0"></div><div style="left:4.22px;top:45.35px;width:131.52px;height:2.40px;background:#b0b0b0"></div><div style="left:4.22px;top:47.75px;width:131.52px;height:2.40px;background:#b0b0b0"></div><div style="left:4.22px;top:54.95px;width:131.52px;height:2.40px;background:#b0b0b0"></div><div style="left:4.22px;top:57.35px;width:131.52px;height:2.40px;background:#b0b0b0"></div><div style="left:4.22px;top:59.75px;width:131.52px;height:2.40px;background:#b0b0b0"></div><div style="left:4.22px;top:62.15px;width:131.52px;height:2.40px;background:#b0b0b0"></div><div style="left:4.22px;top:64.55px;width:131.52px;height:2.40px;background:#b0b0b0"></div><div style="left:4.22px;top:66.95px;width:131.52px;height:2.40px;background:#b0b0b0"></div><div style="left:4.22px;top:71.75px;width:131.52px;height:2.40px;background:#b0b0b0"></div><div style="left:4.22px;top:74.15px;width:131.52px;height:2.40px;background:#b0b0b0"></div><div style="left:4.22px;top:78.95px;width:131.52px;height:2.40px;background:#b0b0b0"></div><div style="left:4.22px;top:81.35px;width:131.52px;height:2.40px;background:#b0b0b0"></div><div style="left:4.22px;top:83.75px;width:131.52px;height:2.40px;background:#b0b0b0"></div><div style="left:4.22px;top:86.16px;width:131.52px;height:2.40px;background:#b0b0b0"></div><div style="left:4.22px;top:88.56px;width:131.52px;height:3.81px;background:#b0b0b0"></div><div style="left:4.22px;top:92.36px;width:131.52px;height:2.40px;background:#b0b0b0"></div><div style="left:5.72px;top:22.20px;width:1.53px;height:1.30px;background:#9a9a9a"></div><div style="left:10.25px;top:22.20px;width:4.84px;height:1.30px;background:#9a9a9a"></div><div style="left:19.99px;top:22.20px;width:9.00px;height:1.30px;background:#9a9a9a"></div><div style="left:35.08px;top:22.20px;width:9.00px;height:1.30px;background:#9a9a9a"></div><div style="left:99.56px;top:22.20px;width:6.01px;height:1.30px;background:#9a9a9a"></div><div style="left:109.78px;top:22.20px;width:9.00px;height:1.30px;background:#9a9a9a"></div><div style="left:124.12px;top:22.20px;width:9.00px;height:1.30px;background:#9a9a9a"></div><div style="left:54.57px;top:19.99px;width:10.00px;height:1.20px;background:#9a9a9a"></div><div style="left:80.21px;top:19.99px;width:10.00px;height:1.20px;background:#9a9a9a"></div><div style="left:5.72px;top:27.87px;width:2.00px;height:1.20px;background:#888"></div><div style="left:9.25px;top:27.87px;width:6.00px;height:1.20px;background:#999"></div><div style="left:17.09px;top:27.87px;width:10.00px;height:1.20px;background:#999"></div><div style="left:42.27px;top:27.87px;width:4.00px;height:1.20px;background:#aaa"></div><div style="left:50.37px;top:27.87px;width:1.50px;height:1.20px;background:#aaa"></div><div style="left:67.36px;top:27.87px;width:4.50px;height:1.20px;background:#aaa"></div><div style="left:102.07px;top:27.87px;width:4.50px;height:1.20px;background:#aaa"></div><div style="left:5.72px;top:30.96px;width:2.00px;height:1.20px;background:#888"></div><div style="left:9.25px;top:30.96px;width:6.00px;height:1.20px;background:#999"></div><div style="left:17.09px;top:30.96px;width:10.00px;height:1.20px;background:#999"></div><div style="left:42.27px;top:30.96px;width:4.00px;height:1.20px;background:#aaa"></div><div style="left:102.07px;top:30.96px;width:4.50px;height:1.20px;background:#aaa"></div><div style="left:5.72px;top:34.04px;width:2.00px;height:1.20px;background:#888"></div><div style="left:9.25px;top:34.04px;width:6.00px;height:1.20px;background:#999"></div><div style="left:17.09px;top:34.04px;width:10.00px;height:1.20px;background:#999"></div><div style="left:42.27px;top:34.04px;width:4.00px;height:1.20px;background:#aaa"></div><div style="left:50.37px;top:34.04px;width:1.50px;height:1.20px;background:#aaa"></div><div style="left:67.36px;top:34.04px;width:4.50px;height:1.20px;background:#aaa"></div><div style="left:102.07px;top:34.04px;width:4.50px;height:1.20px;background:#aaa"></div><div style="left:5.72px;top:36.44px;width:2.00px;height:1.20px;background:#888"></div><div style="left:9.25px;top:36.44px;width:6.00px;height:1.20px;background:#999"></div><div style="left:17.09px;top:36.44px;width:10.00px;height:1.20px;background:#999"></div><div style="left:42.27px;top:36.44px;width:4.00px;height:1.20px;background:#aaa"></div><div style="left:50.37px;top:36.44px;width:1.50px;height:1.20px;background:#aaa"></div><div style="left:67.36px;top:36.44px;width:4.50px;height:1.20px;background:#aaa"></div><div style="left:102.07px;top:36.44px;width:4.50px;height:1.20px;background:#aaa"></div><div style="left:5.72px;top:38.85px;width:2.00px;height:1.20px;background:#888"></div><div style="left:9.25px;top:38.85px;width:6.00px;height:1.20px;background:#999"></div><div style="left:17.09px;top:38.85px;width:10.00px;height:1.20px;background:#999"></div><div style="left:42.27px;top:38.85px;width:4.00px;height:1.20px;background:#aaa"></div><div style="left:102.07px;top:38.85px;width:4.50px;height:1.20px;background:#aaa"></div><div style="left:5.72px;top:41.25px;width:2.00px;height:1.20px;background:#888"></div><div style="left:9.25px;top:41.25px;width:6.00px;height:1.20px;background:#999"></div><div style="left:17.09px;top:41.25px;width:10.00px;height:1.20px;background:#999"></div><div style="left:42.27px;top:41.25px;width:4.00px;height:1.20px;background:#aaa"></div><div style="left:50.37px;top:41.25px;width:1.50px;height:1.20px;background:#aaa"></div><div style="left:67.36px;top:41.25px;width:4.50px;height:1.20px;background:#aaa"></div><div style="left:102.07px;top:41.25px;width:4.50px;height:1.20px;background:#aaa"></div><div style="left:5.72px;top:43.65px;width:2.00px;height:1.20px;background:#888"></div><div style="left:9.25px;top:43.65px;width:6.00px;height:1.20px;background:#999"></div><div style="left:17.09px;top:43.65px;width:10.00px;height:1.20px;background:#999"></div><div style="left:42.27px;top:43.65px;width:4.00px;height:1.20px;background:#aaa"></div><div style="left:50.37px;top:43.65px;width:1.50px;height:1.20px;background:#aaa"></div><div style="left:67.36px;top:43.65px;width:4.50px;height:1.20px;background:#aaa"></div><div style="left:102.07px;top:43.65px;width:4.50px;height:1.20px;background:#aaa"></div><div style="left:5.72px;top:46.05px;width:2.00px;height:1.20px;background:#888"></div><div style="left:9.25px;top:46.05px;width:6.00px;height:1.20px;background:#999"></div><div style="left:17.09px;top:46.05px;width:10.00px;height:1.20px;background:#999"></div><div style="left:42.27px;top:46.05px;width:4.00px;height:1.20px;background:#aaa"></div><div style="left:50.37px;top:46.05px;width:1.50px;height:1.20px;background:#aaa"></div><div style="left:67.36px;top:46.05px;width:4.50px;height:1.20px;background:#aaa"></div><div style="left:102.07px;top:46.05px;width:4.50px;height:1.20px;background:#aaa"></div><div style="left:5.72px;top:48.45px;width:2.00px;height:1.20px;background:#888"></div><div style="left:9.25px;top:48.45px;width:6.00px;height:1.20px;background:#999"></div><div style="left:17.09px;top:48.45px;width:10.00px;height:1.20px;background:#999"></div><div style="left:42.27px;top:48.45px;width:4.00px;height:1.20px;background:#aaa"></div><div style="left:50.37px;top:48.45px;width:1.50px;height:1.20px;background:#aaa"></div><div style="left:67.36px;top:48.45px;width:4.50px;height:1.20px;background:#aaa"></div><div style="left:102.07px;top:48.45px;width:4.50px;height:1.20px;background:#aaa"></div><div style="left:5.72px;top:50.85px;width:2.00px;height:1.20px;background:#888"></div><div style="left:9.25px;top:50.85px;width:6.00px;height:1.20px;background:#999"></div><div style="left:17.09px;top:50.85px;width:10.00px;height:1.20px;background:#999"></div><div style="left:42.27px;top:50.85px;width:4.00px;height:1.20px;background:#aaa"></div><div style="left:50.37px;top:50.85px;width:1.50px;height:1.20px;background:#aaa"></div><div style="left:67.36px;top:50.85px;width:4.50px;height:1.20px;background:#aaa"></div><div style="left:102.07px;top:50.85px;width:4.50px;height:1.20px;background:#aaa"></div><div style="left:5.72px;top:53.25px;width:2.00px;height:1.20px;background:#888"></div><div style="left:9.25px;top:53.25px;width:6.00px;height:1.20px;background:#999"></div><div style="left:17.09px;top:53.25px;width:10.00px;height:1.20px;background:#999"></div><div style="left:42.27px;top:53.25px;width:4.00px;height:1.20px;background:#aaa"></div><div style="left:50.37px;top:53.25px;width:1.50px;height:1.20px;background:#aaa"></div><div style="left:67.36px;top:53.25px;width:4.50px;height:1.20px;background:#aaa"></div><div style="left:102.07px;top:53.25px;width:4.50px;height:1.20px;background:#aaa"></div><div style="left:5.72px;top:55.65px;width:2.00px;height:1.20px;background:#888"></div><div style="left:9.25px;top:55.65px;width:6.00px;height:1.20px;background:#999"></div><div style="left:17.09px;top:55.65px;width:10.00px;height:1.20px;background:#999"></div><div style="left:42.27px;top:55.65px;width:4.00px;height:1.20px;background:#aaa"></div><div style="left:50.37px;top:55.65px;width:1.50px;height:1.20px;background:#aaa"></div><div style="left:67.36px;top:55.65px;width:4.50px;height:1.20px;background:#aaa"></div><div style="left:102.07px;top:55.65px;width:4.50px;height:1.20px;background:#aaa"></div><div style="left:5.72px;top:58.05px;width:2.00px;height:1.20px;background:#888"></div><div style="left:9.25px;top:58.05px;width:6.00px;height:1.20px;background:#999"></div><div style="left:17.09px;top:58.05px;width:10.00px;height:1.20px;background:#999"></div><div style="left:42.27px;top:58.05px;width:4.00px;height:1.20px;background:#aaa"></div><div style="left:50.37px;top:58.05px;width:1.50px;height:1.20px;background:#aaa"></div><div style="left:67.36px;top:58.05px;width:4.50px;height:1.20px;background:#aaa"></div><div style="left:102.07px;top:58.05px;width:4.50px;height:1.20px;background:#aaa"></div><div style="left:5.72px;top:60.45px;width:2.00px;height:1.20px;background:#888"></div><div style="left:9.25px;top:60.45px;width:6.00px;height:1.20px;background:#999"></div><div style="left:17.09px;top:60.45px;width:10.00px;height:1.20px;background:#999"></div><div style="left:42.27px;top:60.45px;width:4.00px;height:1.20px;background:#aaa"></div><div style="left:50.37px;top:60.45px;width:1.50px;height:1.20px;background:#aaa"></div><div style="left:67.36px;top:60.45px;width:4.50px;height:1.20px;background:#aaa"></div><div style="left:102.07px;top:60.45px;width:4.50px;height:1.20px;background:#aaa"></div><div style="left:5.72px;top:62.85px;width:2.00px;height:1.20px;background:#888"></div><div style="left:9.25px;top:62.85px;width:6.00px;height:1.20px;background:#999"></div><div style="left:17.09px;top:62.85px;width:10.00px;height:1.20px;background:#999"></div><div style="left:42.27px;top:62.85px;width:4.00px;height:1.20px;background:#aaa"></div><div style="left:50.37px;top:62.85px;width:1.50px;height:1.20px;background:#aaa"></div><div style="left:67.36px;top:62.85px;width:4.50px;height:1.20px;background:#aaa"></div><div style="left:102.07px;top:62.85px;width:4.50px;height:1.20px;background:#aaa"></div><div style="left:5.72px;top:65.25px;width:2.00px;height:1.20px;background:#888"></div><div style="left:9.25px;top:65.25px;width:6.00px;height:1.20px;background:#999"></div><div style="left:17.09px;top:65.25px;width:10.00px;height:1.20px;background:#999"></div><div style="left:42.27px;top:65.25px;width:4.00px;height:1.20px;background:#aaa"></div><div style="left:50.37px;top:65.25px;width:1.50px;height:1.20px;background:#aaa"></div><div style="left:67.36px;top:65.25px;width:4.50px;height:1.20px;background:#aaa"></div><div style="left:102.07px;top:65.25px;width:4.50px;height:1.20px;background:#aaa"></div><div style="left:5.72px;top:67.65px;width:2.00px;height:1.20px;background:#888"></div><div style="left:9.25px;top:67.65px;width:6.00px;height:1.20px;background:#999"></div><div style="left:17.09px;top:67.65px;width:10.00px;height:1.20px;background:#999"></div><div style="left:42.27px;top:67.65px;width:4.00px;height:1.20px;background:#aaa"></div><div style="left:50.37px;top:67.65px;width:1.50px;height:1.20px;background:#aaa"></div><div style="left:67.36px;top:67.65px;width:4.50px;height:1.20px;background:#aaa"></div><div style="left:102.07px;top:67.65px;width:4.50px;height:1.20px;background:#aaa"></div><div style="left:5.72px;top:70.05px;width:2.00px;height:1.20px;background:#888"></div><div style="left:9.25px;top:70.05px;width:6.00px;height:1.20px;background:#999"></div><div style="left:17.09px;top:70.05px;width:10.00px;height:1.20px;background:#999"></div><div style="left:42.27px;top:70.05px;width:4.00px;height:1.20px;background:#aaa"></div><div style="left:50.37px;top:70.05px;width:1.50px;height:1.20px;background:#aaa"></div><div style="left:67.36px;top:70.05px;width:4.50px;height:1.20px;background:#aaa"></div><div style="left:102.07px;top:70.05px;width:4.50px;height:1.20px;background:#aaa"></div><div style="left:5.72px;top:72.45px;width:2.00px;height:1.20px;background:#888"></div><div style="left:9.25px;top:72.45px;width:6.00px;height:1.20px;background:#999"></div><div style="left:17.09px;top:72.45px;width:10.00px;height:1.20px;background:#999"></div><div style="left:42.27px;top:72.45px;width:4.00px;height:1.20px;background:#aaa"></div><div style="left:50.37px;top:72.45px;width:1.50px;height:1.20px;background:#aaa"></div><div style="left:67.36px;top:72.45px;width:4.50px;height:1.20px;background:#aaa"></div><div style="left:102.07px;top:72.45px;width:4.50px;height:1.20px;background:#aaa"></div><div style="left:5.72px;top:74.85px;width:2.00px;height:1.20px;background:#888"></div><div style="left:9.25px;top:74.85px;width:6.00px;height:1.20px;background:#999"></div><div style="left:17.09px;top:74.85px;width:10.00px;height:1.20px;background:#999"></div><div style="left:42.27px;top:74.85px;width:4.00px;height:1.20px;background:#aaa"></div><div style="left:50.37px;top:74.85px;width:1.50px;height:1.20px;background:#aaa"></div><div style="left:67.36px;top:74.85px;width:4.50px;height:1.20px;background:#aaa"></div><div style="left:102.07px;top:74.85px;width:4.50px;height:1.20px;background:#aaa"></div><div style="left:5.72px;top:77.25px;width:2.00px;height:1.20px;background:#888"></div><div style="left:9.25px;top:77.25px;width:6.00px;height:1.20px;background:#999"></div><div style="left:17.09px;top:77.25px;width:10.00px;height:1.20px;background:#999"></div><div style="left:42.27px;top:77.25px;width:4.00px;height:1.20px;background:#aaa"></div><div style="left:50.37px;top:77.25px;width:1.50px;height:1.20px;background:#aaa"></div><div style="left:67.36px;top:77.25px;width:4.50px;height:1.20px;background:#aaa"></div><div style="left:102.07px;top:77.25px;width:4.50px;height:1.20px;background:#aaa"></div><div style="left:5.72px;top:79.65px;width:2.00px;height:1.20px;background:#888"></div><div style="left:9.25px;top:79.65px;width:6.00px;height:1.20px;background:#999"></div><div style="left:17.09px;top:79.65px;width:10.00px;height:1.20px;background:#999"></div><div style="left:42.27px;top:79.65px;width:4.00px;height:1.20px;background:#aaa"></div><div style="left:50.37px;top:79.65px;width:1.50px;height:1.20px;background:#aaa"></div><div style="left:67.36px;top:79.65px;width:4.50px;height:1.20px;background:#aaa"></div><div style="left:102.07px;top:79.65px;width:4.50px;height:1.20px;background:#aaa"></div><div style="left:5.72px;top:82.05px;width:2.00px;height:1.20px;background:#888"></div><div style="left:9.25px;top:82.05px;width:6.00px;height:1.20px;background:#999"></div><div style="left:17.09px;top:82.05px;width:10.00px;height:1.20px;background:#999"></div><div style="left:42.27px;top:82.05px;width:4.00px;height:1.20px;background:#aaa"></div><div style="left:50.37px;top:82.05px;width:1.50px;height:1.20px;background:#aaa"></div><div style="left:67.36px;top:82.05px;width:4.50px;height:1.20px;background:#aaa"></div><div style="left:102.07px;top:82.05px;width:4.50px;height:1.20px;background:#aaa"></div><div style="left:5.72px;top:84.45px;width:2.00px;height:1.20px;background:#888"></div><div style="left:9.25px;top:84.45px;width:6.00px;height:1.20px;background:#999"></div><div style="left:17.09px;top:84.45px;width:10.00px;height:1.20px;background:#999"></div><div style="left:42.27px;top:84.45px;width:4.00px;height:1.20px;background:#aaa"></div><div style="left:50.37px;top:84.45px;width:1.50px;height:1.20px;background:#aaa"></div><div style="left:67.36px;top:84.45px;width:4.50px;height:1.20px;background:#aaa"></div><div style="left:102.07px;top:84.45px;width:4.50px;height:1.20px;background:#aaa"></div><div style="left:5.72px;top:86.86px;width:2.00px;height:1.20px;background:#888"></div><div style="left:9.25px;top:86.86px;width:6.00px;height:1.20px;background:#999"></div><div style="left:17.09px;top:86.86px;width:10.00px;height:1.20px;background:#999"></div><div style="left:42.27px;top:86.86px;width:4.00px;height:1.20px;background:#aaa"></div><div style="left:50.37px;top:86.86px;width:1.50px;height:1.20px;background:#aaa"></div><div style="left:67.36px;top:86.86px;width:4.50px;height:1.20px;background:#aaa"></div><div style="left:102.07px;top:86.86px;width:4.50px;height:1.20px;background:#aaa"></div><div style="left:5.72px;top:89.96px;width:2.00px;height:1.20px;background:#888"></div><div style="left:9.25px;top:89.96px;width:6.00px;height:1.20px;background:#999"></div><div style="left:17.09px;top:89.96px;width:10.00px;height:1.20px;background:#999"></div><div style="left:42.27px;top:89.96px;width:4.00px;height:1.20px;background:#aaa"></div><div style="left:50.37px;top:89.96px;width:1.50px;height:1.20px;background:#aaa"></div><div style="left:67.36px;top:89.96px;width:4.50px;height:1.20px;background:#aaa"></div><div style="left:102.07px;top:89.96px;width:4.50px;height:1.20px;background:#aaa"></div><div style="left:5.72px;top:93.06px;width:2.00px;height:1.20px;background:#888"></div><div style="left:9.25px;top:93.06px;width:6.00px;height:1.20px;background:#999"></div><div style="left:17.09px;top:93.06px;width:10.00px;height:1.20px;background:#999"></div><div style="left:42.27px;top:93.06px;width:4.00px;height:1.20px;background:#aaa"></div><div style="left:50.37px;top:93.06px;width:1.50px;height:1.20px;background:#aaa"></div><div style="left:67.36px;top:93.06px;width:4.50px;height:1.20px;background:#aaa"></div><div style="left:102.07px;top:93.06px;width:4.50px;height:1.20px;background:#aaa"></div><div style="left:4.22px;top:18.01px;width:132.52px;height:1.00px;background:#000"></div><div style="left:46.77px;top:22.59px;width:51.29px;height:1.00px;background:#000"></div><div style="left:4.22px;top:27.17px;width:132.52px;height:1.00px;background:#000"></div><div style="left:4.22px;top:29.57px;width:132.52px;height:1.00px;background:#000"></div><div style="left:4.22px;top:33.34px;width:132.52px;height:1.00px;background:#000"></div><div style="left:4.22px;top:35.74px;width:132.52px;height:1.00px;background:#000"></div><div style="left:4.22px;top:38.15px;width:132.52px;height:1.00px;background:#000"></div><div style="left:4.22px;top:40.55px;width:132.52px;height:1.00px;background:#000"></div><div style="left:4.22px;top:42.95px;width:132.52px;height:1.00px;background:#000"></div><div style="left:4.22px;top:45.35px;width:132.52px;height:1.00px;background:#000"></div><div style="left:4.22px;top:47.75px;width:132.52px;height:1.00px;background:#000"></div><div style="left:4.22px;top:50.15px;width:132.52px;height:1.00px;background:#000"></div><div style="left:4.22px;top:52.55px;width:132.52px;height:1.00px;background:#000"></div><div style="left:4.22px;top:54.95px;width:132.52px;height:1.00px;background:#000"></div><div style="left:4.22px;top:57.35px;width:132.52px;height:1.00px;background:#000"></div><div style="left:4.22px;top:59.75px;width:132.52px;height:1.00px;background:#000"></div><div style="left:4.22px;top:62.15px;width:132.52px;height:1.00px;background:#000"></div><div style="left:4.22px;top:64.55px;width:132.52px;height:1.00px;background:#000"></div><div style="left:4.22px;top:66.95px;width:132.52px;height:1.00px;background:#000"></div><div style="left:4.22px;top:69.35px;width:132.52px;height:1.00px;background:#000"></div><div style="left:4.22px;top:71.75px;width:132.52px;height:1.00px;background:#000"></div><div style="left:4.22px;top:74.15px;width:132.52px;height:1.00px;background:#000"></div><div style="left:4.22px;top:76.55px;width:132.52px;height:1.00px;background:#000"></div><div style="left:4.22px;top:78.95px;width:132.52px;height:1.00px;background:#000"></div><div style="left:4.22px;top:81.35px;width:132.52px;height:1.00px;background:#000"></div><div style="left:4.22px;top:83.75px;width:132.52px;height:1.00px;background:#000"></div><div style="left:4.22px;top:86.16px;width:132.52px;height:1.00px;background:#000"></div><div style="left:4.22px;top:88.56px;width:132.52px;height:1.00px;background:#000"></div><div style="left:4.22px;top:92.36px;width:132.52px;height:1.00px;background:#000"></div><div style="left:4.22px;top:94.76px;width:132.52px;height:1.00px;background:#000"></div><div style="left:4.12px;top:18.01px;width:1.20px;height:77.76px;background:#000"></div><div style="left:8.65px;top:18.01px;width:1.20px;height:77.76px;background:#000"></div><div style="left:16.49px;top:18.01px;width:1.20px;height:77.76px;background:#000"></div><div style="left:32.30px;top:18.01px;width:1.20px;height:77.76px;background:#000"></div><div style="left:46.67px;top:18.01px;width:1.20px;height:77.76px;background:#000"></div><div style="left:52.37px;top:22.59px;width:1.00px;height:73.17px;background:#000"></div><div style="left:58.02px;top:22.59px;width:1.00px;height:73.17px;background:#000"></div><div style="left:72.26px;top:18.01px;width:1.20px;height:77.76px;background:#000"></div><div style="left:78.03px;top:22.59px;width:1.00px;height:73.17px;background:#000"></div><div style="left:83.68px;top:22.59px;width:1.00px;height:73.17px;background:#000"></div><div style="left:97.96px;top:18.01px;width:1.20px;height:77.76px;background:#000"></div><div style="left:106.97px;top:18.01px;width:1.20px;height:77.76px;background:#000"></div><div style="left:121.39px;top:18.01px;width:1.20px;height:77.76px;background:#000"></div><div style="left:135.65px;top:18.01px;width:1.20px;height:77.76px;background:#000"></div><div style="left:69.71px;top:96.73px;width:1.00px;height:1.20px;background:#bbb"></div><div style="left:0;top:0;width:140px;height:102px;background:rgba(50,54,57,.47)"></div></div>
<div class="tlab" style="top:440px">3</div>
<div class="thumb" style="top:477px"><div style="left:4.22px;top:4.20px;width:131.52px;height:8.80px;background:#d3d3d3"></div><div style="left:4.22px;top:13.00px;width:131.52px;height:39.80px;background:#b4b4b4"></div><div style="left:4.22px;top:52.80px;width:131.52px;height:3.60px;background:#f4f4f4"></div><div style="left:10.25px;top:8.00px;width:4.84px;height:1.30px;background:#a0a0a0"></div><div style="left:19.99px;top:8.00px;width:9.00px;height:1.30px;background:#a0a0a0"></div><div style="left:35.08px;top:8.00px;width:9.00px;height:1.30px;background:#a0a0a0"></div><div style="left:99.56px;top:8.00px;width:6.01px;height:1.30px;background:#a0a0a0"></div><div style="left:109.78px;top:8.00px;width:9.00px;height:1.30px;background:#a0a0a0"></div><div style="left:124.12px;top:8.00px;width:9.00px;height:1.30px;background:#a0a0a0"></div><div style="left:4.22px;top:13.00px;width:132.52px;height:1.00px;background:#000"></div><div style="left:4.22px;top:15.45px;width:132.52px;height:1.00px;background:#000"></div><div style="left:4.22px;top:17.90px;width:132.52px;height:1.00px;background:#000"></div><div style="left:4.22px;top:20.35px;width:132.52px;height:1.00px;background:#000"></div><div style="left:4.22px;top:22.80px;width:132.52px;height:1.00px;background:#000"></div><div style="left:4.22px;top:25.25px;width:132.52px;height:1.00px;background:#000"></div><div style="left:4.22px;top:27.70px;width:132.52px;height:1.00px;background:#000"></div><div style="left:4.22px;top:30.15px;width:132.52px;height:1.00px;background:#000"></div><div style="left:4.22px;top:32.60px;width:132.52px;height:1.00px;background:#000"></div><div style="left:4.22px;top:35.05px;width:132.52px;height:1.00px;background:#000"></div><div style="left:4.22px;top:37.50px;width:132.52px;height:1.00px;background:#000"></div><div style="left:4.22px;top:39.95px;width:132.52px;height:1.00px;background:#000"></div><div style="left:4.22px;top:42.40px;width:132.52px;height:1.00px;background:#000"></div><div style="left:4.22px;top:44.85px;width:132.52px;height:1.00px;background:#000"></div><div style="left:4.22px;top:47.30px;width:132.52px;height:1.00px;background:#000"></div><div style="left:4.22px;top:49.75px;width:132.52px;height:1.00px;background:#000"></div><div style="left:4.22px;top:52.20px;width:132.52px;height:1.00px;background:#000"></div><div style="left:4.22px;top:4.20px;width:132.52px;height:1.00px;background:#000"></div><div style="left:4.22px;top:52.80px;width:132.52px;height:1.00px;background:#000"></div><div style="left:4.22px;top:56.40px;width:132.52px;height:1.00px;background:#000"></div><div style="left:46.77px;top:8.20px;width:51.29px;height:1.00px;background:#000"></div><div style="left:4.22px;top:4.20px;width:1.00px;height:53.20px;background:#000"></div><div style="left:8.75px;top:4.20px;width:1.00px;height:48.60px;background:#000"></div><div style="left:16.59px;top:4.20px;width:1.00px;height:48.60px;background:#000"></div><div style="left:32.40px;top:4.20px;width:1.00px;height:53.20px;background:#000"></div><div style="left:46.77px;top:4.20px;width:1.00px;height:53.20px;background:#000"></div><div style="left:52.37px;top:8.20px;width:1.00px;height:49.20px;background:#000"></div><div style="left:58.02px;top:8.20px;width:1.00px;height:49.20px;background:#000"></div><div style="left:72.36px;top:4.20px;width:1.00px;height:53.20px;background:#000"></div><div style="left:78.03px;top:8.20px;width:1.00px;height:49.20px;background:#000"></div><div style="left:83.68px;top:8.20px;width:1.00px;height:49.20px;background:#000"></div><div style="left:98.06px;top:4.20px;width:1.00px;height:53.20px;background:#000"></div><div style="left:107.07px;top:4.20px;width:1.00px;height:53.20px;background:#000"></div><div style="left:121.49px;top:4.20px;width:1.00px;height:53.20px;background:#000"></div><div style="left:135.75px;top:4.20px;width:1.00px;height:53.20px;background:#000"></div><div style="left:39.40px;top:53.40px;width:6.00px;height:2.80px;background:#111"></div><div style="left:47.27px;top:53.40px;width:3.00px;height:2.80px;background:#111"></div><div style="left:67.02px;top:53.40px;width:5.00px;height:2.80px;background:#111"></div><div style="left:98.56px;top:53.40px;width:7.00px;height:2.80px;background:#111"></div><div style="left:21.20px;top:66.30px;width:10.00px;height:1.00px;background:#9a9a9a"></div><div style="left:18.20px;top:72.90px;width:16.00px;height:1.00px;background:#707070"></div><div style="left:65.00px;top:66.30px;width:10.00px;height:1.00px;background:#9a9a9a"></div><div style="left:62.00px;top:72.90px;width:16.00px;height:1.00px;background:#707070"></div><div style="left:109.00px;top:66.30px;width:10.00px;height:1.00px;background:#9a9a9a"></div><div style="left:106.00px;top:72.90px;width:16.00px;height:1.00px;background:#707070"></div><div style="left:63.00px;top:75.90px;width:14.00px;height:0.80px;background:#999"></div><div style="left:105.00px;top:63.50px;width:18.00px;height:0.60px;background:#bbb"></div><div style="left:69.50px;top:94.50px;width:1.00px;height:1.00px;background:#777"></div><div style="left:0;top:0;width:140px;height:102px;background:rgba(50,54,57,.47)"></div></div>
<div class="tlab" style="top:591px">4</div>
<div class="thumb" style="top:628px"><div style="left:4.48px;top:5.44px;width:49.32px;height:1.00px;background:#bdbdbd"></div><div style="left:4.48px;top:8.82px;width:27.62px;height:1.00px;background:#a6a6a6"></div><div style="left:56.84px;top:12.20px;width:26.32px;height:1.20px;background:#888"></div><div style="left:53.95px;top:15.73px;width:31.82px;height:1.00px;background:#c4c4c4"></div><div style="left:4.22px;top:18.01px;width:131.52px;height:9.16px;background:#d3d3d3"></div><div style="left:4.22px;top:27.17px;width:131.52px;height:2.40px;background:#b0b0b0"></div><div style="left:4.22px;top:33.34px;width:131.52px;height:2.40px;background:#b0b0b0"></div><div style="left:4.22px;top:35.74px;width:131.52px;height:2.40px;background:#b0b0b0"></div><div style="left:4.22px;top:40.55px;width:131.52px;height:2.40px;background:#b0b0b0"></div><div style="left:4.22px;top:42.95px;width:131.52px;height:2.40px;background:#b0b0b0"></div><div style="left:4.22px;top:45.35px;width:131.52px;height:2.40px;background:#b0b0b0"></div><div style="left:4.22px;top:47.75px;width:131.52px;height:2.40px;background:#b0b0b0"></div><div style="left:4.22px;top:54.95px;width:131.52px;height:2.40px;background:#b0b0b0"></div><div style="left:4.22px;top:57.35px;width:131.52px;height:2.40px;background:#b0b0b0"></div><div style="left:4.22px;top:59.75px;width:131.52px;height:2.40px;background:#b0b0b0"></div><div style="left:4.22px;top:62.15px;width:131.52px;height:2.40px;background:#b0b0b0"></div><div style="left:4.22px;top:64.55px;width:131.52px;height:2.40px;background:#b0b0b0"></div><div style="left:4.22px;top:66.95px;width:131.52px;height:2.40px;background:#b0b0b0"></div><div style="left:4.22px;top:71.75px;width:131.52px;height:2.40px;background:#b0b0b0"></div><div style="left:4.22px;top:74.15px;width:131.52px;height:2.40px;background:#b0b0b0"></div><div style="left:4.22px;top:78.95px;width:131.52px;height:2.40px;background:#b0b0b0"></div><div style="left:4.22px;top:81.35px;width:131.52px;height:2.40px;background:#b0b0b0"></div><div style="left:4.22px;top:83.75px;width:131.52px;height:2.40px;background:#b0b0b0"></div><div style="left:4.22px;top:86.16px;width:131.52px;height:2.40px;background:#b0b0b0"></div><div style="left:4.22px;top:88.56px;width:131.52px;height:3.81px;background:#b0b0b0"></div><div style="left:4.22px;top:92.36px;width:131.52px;height:2.40px;background:#b0b0b0"></div><div style="left:5.72px;top:22.20px;width:1.53px;height:1.30px;background:#9a9a9a"></div><div style="left:10.25px;top:22.20px;width:4.84px;height:1.30px;background:#9a9a9a"></div><div style="left:19.99px;top:22.20px;width:9.00px;height:1.30px;background:#9a9a9a"></div><div style="left:35.08px;top:22.20px;width:9.00px;height:1.30px;background:#9a9a9a"></div><div style="left:99.56px;top:22.20px;width:6.01px;height:1.30px;background:#9a9a9a"></div><div style="left:109.78px;top:22.20px;width:9.00px;height:1.30px;background:#9a9a9a"></div><div style="left:124.12px;top:22.20px;width:9.00px;height:1.30px;background:#9a9a9a"></div><div style="left:54.57px;top:19.99px;width:10.00px;height:1.20px;background:#9a9a9a"></div><div style="left:80.21px;top:19.99px;width:10.00px;height:1.20px;background:#9a9a9a"></div><div style="left:5.72px;top:27.87px;width:2.00px;height:1.20px;background:#888"></div><div style="left:9.25px;top:27.87px;width:6.00px;height:1.20px;background:#999"></div><div style="left:17.09px;top:27.87px;width:10.00px;height:1.20px;background:#999"></div><div style="left:42.27px;top:27.87px;width:4.00px;height:1.20px;background:#aaa"></div><div style="left:50.37px;top:27.87px;width:1.50px;height:1.20px;background:#aaa"></div><div style="left:67.36px;top:27.87px;width:4.50px;height:1.20px;background:#aaa"></div><div style="left:102.07px;top:27.87px;width:4.50px;height:1.20px;background:#aaa"></div><div style="left:5.72px;top:30.96px;width:2.00px;height:1.20px;background:#888"></div><div style="left:9.25px;top:30.96px;width:6.00px;height:1.20px;background:#999"></div><div style="left:17.09px;top:30.96px;width:10.00px;height:1.20px;background:#999"></div><div style="left:42.27px;top:30.96px;width:4.00px;height:1.20px;background:#aaa"></div><div style="left:102.07px;top:30.96px;width:4.50px;height:1.20px;background:#aaa"></div><div style="left:5.72px;top:34.04px;width:2.00px;height:1.20px;background:#888"></div><div style="left:9.25px;top:34.04px;width:6.00px;height:1.20px;background:#999"></div><div style="left:17.09px;top:34.04px;width:10.00px;height:1.20px;background:#999"></div><div style="left:42.27px;top:34.04px;width:4.00px;height:1.20px;background:#aaa"></div><div style="left:50.37px;top:34.04px;width:1.50px;height:1.20px;background:#aaa"></div><div style="left:67.36px;top:34.04px;width:4.50px;height:1.20px;background:#aaa"></div><div style="left:102.07px;top:34.04px;width:4.50px;height:1.20px;background:#aaa"></div><div style="left:5.72px;top:36.44px;width:2.00px;height:1.20px;background:#888"></div><div style="left:9.25px;top:36.44px;width:6.00px;height:1.20px;background:#999"></div><div style="left:17.09px;top:36.44px;width:10.00px;height:1.20px;background:#999"></div><div style="left:42.27px;top:36.44px;width:4.00px;height:1.20px;background:#aaa"></div><div style="left:50.37px;top:36.44px;width:1.50px;height:1.20px;background:#aaa"></div><div style="left:67.36px;top:36.44px;width:4.50px;height:1.20px;background:#aaa"></div><div style="left:102.07px;top:36.44px;width:4.50px;height:1.20px;background:#aaa"></div><div style="left:5.72px;top:38.85px;width:2.00px;height:1.20px;background:#888"></div><div style="left:9.25px;top:38.85px;width:6.00px;height:1.20px;background:#999"></div><div style="left:17.09px;top:38.85px;width:10.00px;height:1.20px;background:#999"></div><div style="left:42.27px;top:38.85px;width:4.00px;height:1.20px;background:#aaa"></div><div style="left:102.07px;top:38.85px;width:4.50px;height:1.20px;background:#aaa"></div><div style="left:5.72px;top:41.25px;width:2.00px;height:1.20px;background:#888"></div><div style="left:9.25px;top:41.25px;width:6.00px;height:1.20px;background:#999"></div><div style="left:17.09px;top:41.25px;width:10.00px;height:1.20px;background:#999"></div><div style="left:42.27px;top:41.25px;width:4.00px;height:1.20px;background:#aaa"></div><div style="left:50.37px;top:41.25px;width:1.50px;height:1.20px;background:#aaa"></div><div style="left:67.36px;top:41.25px;width:4.50px;height:1.20px;background:#aaa"></div><div style="left:102.07px;top:41.25px;width:4.50px;height:1.20px;background:#aaa"></div><div style="left:5.72px;top:43.65px;width:2.00px;height:1.20px;background:#888"></div><div style="left:9.25px;top:43.65px;width:6.00px;height:1.20px;background:#999"></div><div style="left:17.09px;top:43.65px;width:10.00px;height:1.20px;background:#999"></div><div style="left:42.27px;top:43.65px;width:4.00px;height:1.20px;background:#aaa"></div><div style="left:50.37px;top:43.65px;width:1.50px;height:1.20px;background:#aaa"></div><div style="left:67.36px;top:43.65px;width:4.50px;height:1.20px;background:#aaa"></div><div style="left:102.07px;top:43.65px;width:4.50px;height:1.20px;background:#aaa"></div><div style="left:5.72px;top:46.05px;width:2.00px;height:1.20px;background:#888"></div><div style="left:9.25px;top:46.05px;width:6.00px;height:1.20px;background:#999"></div><div style="left:17.09px;top:46.05px;width:10.00px;height:1.20px;background:#999"></div><div style="left:42.27px;top:46.05px;width:4.00px;height:1.20px;background:#aaa"></div><div style="left:50.37px;top:46.05px;width:1.50px;height:1.20px;background:#aaa"></div><div style="left:67.36px;top:46.05px;width:4.50px;height:1.20px;background:#aaa"></div><div style="left:102.07px;top:46.05px;width:4.50px;height:1.20px;background:#aaa"></div><div style="left:5.72px;top:48.45px;width:2.00px;height:1.20px;background:#888"></div><div style="left:9.25px;top:48.45px;width:6.00px;height:1.20px;background:#999"></div><div style="left:17.09px;top:48.45px;width:10.00px;height:1.20px;background:#999"></div><div style="left:42.27px;top:48.45px;width:4.00px;height:1.20px;background:#aaa"></div><div style="left:50.37px;top:48.45px;width:1.50px;height:1.20px;background:#aaa"></div><div style="left:67.36px;top:48.45px;width:4.50px;height:1.20px;background:#aaa"></div><div style="left:102.07px;top:48.45px;width:4.50px;height:1.20px;background:#aaa"></div><div style="left:5.72px;top:50.85px;width:2.00px;height:1.20px;background:#888"></div><div style="left:9.25px;top:50.85px;width:6.00px;height:1.20px;background:#999"></div><div style="left:17.09px;top:50.85px;width:10.00px;height:1.20px;background:#999"></div><div style="left:42.27px;top:50.85px;width:4.00px;height:1.20px;background:#aaa"></div><div style="left:50.37px;top:50.85px;width:1.50px;height:1.20px;background:#aaa"></div><div style="left:67.36px;top:50.85px;width:4.50px;height:1.20px;background:#aaa"></div><div style="left:102.07px;top:50.85px;width:4.50px;height:1.20px;background:#aaa"></div><div style="left:5.72px;top:53.25px;width:2.00px;height:1.20px;background:#888"></div><div style="left:9.25px;top:53.25px;width:6.00px;height:1.20px;background:#999"></div><div style="left:17.09px;top:53.25px;width:10.00px;height:1.20px;background:#999"></div><div style="left:42.27px;top:53.25px;width:4.00px;height:1.20px;background:#aaa"></div><div style="left:50.37px;top:53.25px;width:1.50px;height:1.20px;background:#aaa"></div><div style="left:67.36px;top:53.25px;width:4.50px;height:1.20px;background:#aaa"></div><div style="left:102.07px;top:53.25px;width:4.50px;height:1.20px;background:#aaa"></div><div style="left:5.72px;top:55.65px;width:2.00px;height:1.20px;background:#888"></div><div style="left:9.25px;top:55.65px;width:6.00px;height:1.20px;background:#999"></div><div style="left:17.09px;top:55.65px;width:10.00px;height:1.20px;background:#999"></div><div style="left:42.27px;top:55.65px;width:4.00px;height:1.20px;background:#aaa"></div><div style="left:50.37px;top:55.65px;width:1.50px;height:1.20px;background:#aaa"></div><div style="left:67.36px;top:55.65px;width:4.50px;height:1.20px;background:#aaa"></div><div style="left:102.07px;top:55.65px;width:4.50px;height:1.20px;background:#aaa"></div><div style="left:5.72px;top:58.05px;width:2.00px;height:1.20px;background:#888"></div><div style="left:9.25px;top:58.05px;width:6.00px;height:1.20px;background:#999"></div><div style="left:17.09px;top:58.05px;width:10.00px;height:1.20px;background:#999"></div><div style="left:42.27px;top:58.05px;width:4.00px;height:1.20px;background:#aaa"></div><div style="left:50.37px;top:58.05px;width:1.50px;height:1.20px;background:#aaa"></div><div style="left:67.36px;top:58.05px;width:4.50px;height:1.20px;background:#aaa"></div><div style="left:102.07px;top:58.05px;width:4.50px;height:1.20px;background:#aaa"></div><div style="left:5.72px;top:60.45px;width:2.00px;height:1.20px;background:#888"></div><div style="left:9.25px;top:60.45px;width:6.00px;height:1.20px;background:#999"></div><div style="left:17.09px;top:60.45px;width:10.00px;height:1.20px;background:#999"></div><div style="left:42.27px;top:60.45px;width:4.00px;height:1.20px;background:#aaa"></div><div style="left:50.37px;top:60.45px;width:1.50px;height:1.20px;background:#aaa"></div><div style="left:67.36px;top:60.45px;width:4.50px;height:1.20px;background:#aaa"></div><div style="left:102.07px;top:60.45px;width:4.50px;height:1.20px;background:#aaa"></div><div style="left:5.72px;top:62.85px;width:2.00px;height:1.20px;background:#888"></div><div style="left:9.25px;top:62.85px;width:6.00px;height:1.20px;background:#999"></div><div style="left:17.09px;top:62.85px;width:10.00px;height:1.20px;background:#999"></div><div style="left:42.27px;top:62.85px;width:4.00px;height:1.20px;background:#aaa"></div><div style="left:50.37px;top:62.85px;width:1.50px;height:1.20px;background:#aaa"></div><div style="left:67.36px;top:62.85px;width:4.50px;height:1.20px;background:#aaa"></div><div style="left:102.07px;top:62.85px;width:4.50px;height:1.20px;background:#aaa"></div><div style="left:5.72px;top:65.25px;width:2.00px;height:1.20px;background:#888"></div><div style="left:9.25px;top:65.25px;width:6.00px;height:1.20px;background:#999"></div><div style="left:17.09px;top:65.25px;width:10.00px;height:1.20px;background:#999"></div><div style="left:42.27px;top:65.25px;width:4.00px;height:1.20px;background:#aaa"></div><div style="left:50.37px;top:65.25px;width:1.50px;height:1.20px;background:#aaa"></div><div style="left:67.36px;top:65.25px;width:4.50px;height:1.20px;background:#aaa"></div><div style="left:102.07px;top:65.25px;width:4.50px;height:1.20px;background:#aaa"></div><div style="left:5.72px;top:67.65px;width:2.00px;height:1.20px;background:#888"></div><div style="left:9.25px;top:67.65px;width:6.00px;height:1.20px;background:#999"></div><div style="left:17.09px;top:67.65px;width:10.00px;height:1.20px;background:#999"></div><div style="left:42.27px;top:67.65px;width:4.00px;height:1.20px;background:#aaa"></div><div style="left:50.37px;top:67.65px;width:1.50px;height:1.20px;background:#aaa"></div><div style="left:67.36px;top:67.65px;width:4.50px;height:1.20px;background:#aaa"></div><div style="left:102.07px;top:67.65px;width:4.50px;height:1.20px;background:#aaa"></div><div style="left:5.72px;top:70.05px;width:2.00px;height:1.20px;background:#888"></div><div style="left:9.25px;top:70.05px;width:6.00px;height:1.20px;background:#999"></div><div style="left:17.09px;top:70.05px;width:10.00px;height:1.20px;background:#999"></div><div style="left:42.27px;top:70.05px;width:4.00px;height:1.20px;background:#aaa"></div><div style="left:50.37px;top:70.05px;width:1.50px;height:1.20px;background:#aaa"></div><div style="left:67.36px;top:70.05px;width:4.50px;height:1.20px;background:#aaa"></div><div style="left:102.07px;top:70.05px;width:4.50px;height:1.20px;background:#aaa"></div><div style="left:5.72px;top:72.45px;width:2.00px;height:1.20px;background:#888"></div><div style="left:9.25px;top:72.45px;width:6.00px;height:1.20px;background:#999"></div><div style="left:17.09px;top:72.45px;width:10.00px;height:1.20px;background:#999"></div><div style="left:42.27px;top:72.45px;width:4.00px;height:1.20px;background:#aaa"></div><div style="left:50.37px;top:72.45px;width:1.50px;height:1.20px;background:#aaa"></div><div style="left:67.36px;top:72.45px;width:4.50px;height:1.20px;background:#aaa"></div><div style="left:102.07px;top:72.45px;width:4.50px;height:1.20px;background:#aaa"></div><div style="left:5.72px;top:74.85px;width:2.00px;height:1.20px;background:#888"></div><div style="left:9.25px;top:74.85px;width:6.00px;height:1.20px;background:#999"></div><div style="left:17.09px;top:74.85px;width:10.00px;height:1.20px;background:#999"></div><div style="left:42.27px;top:74.85px;width:4.00px;height:1.20px;background:#aaa"></div><div style="left:50.37px;top:74.85px;width:1.50px;height:1.20px;background:#aaa"></div><div style="left:67.36px;top:74.85px;width:4.50px;height:1.20px;background:#aaa"></div><div style="left:102.07px;top:74.85px;width:4.50px;height:1.20px;background:#aaa"></div><div style="left:5.72px;top:77.25px;width:2.00px;height:1.20px;background:#888"></div><div style="left:9.25px;top:77.25px;width:6.00px;height:1.20px;background:#999"></div><div style="left:17.09px;top:77.25px;width:10.00px;height:1.20px;background:#999"></div><div style="left:42.27px;top:77.25px;width:4.00px;height:1.20px;background:#aaa"></div><div style="left:50.37px;top:77.25px;width:1.50px;height:1.20px;background:#aaa"></div><div style="left:67.36px;top:77.25px;width:4.50px;height:1.20px;background:#aaa"></div><div style="left:102.07px;top:77.25px;width:4.50px;height:1.20px;background:#aaa"></div><div style="left:5.72px;top:79.65px;width:2.00px;height:1.20px;background:#888"></div><div style="left:9.25px;top:79.65px;width:6.00px;height:1.20px;background:#999"></div><div style="left:17.09px;top:79.65px;width:10.00px;height:1.20px;background:#999"></div><div style="left:42.27px;top:79.65px;width:4.00px;height:1.20px;background:#aaa"></div><div style="left:50.37px;top:79.65px;width:1.50px;height:1.20px;background:#aaa"></div><div style="left:67.36px;top:79.65px;width:4.50px;height:1.20px;background:#aaa"></div><div style="left:102.07px;top:79.65px;width:4.50px;height:1.20px;background:#aaa"></div><div style="left:5.72px;top:82.05px;width:2.00px;height:1.20px;background:#888"></div><div style="left:9.25px;top:82.05px;width:6.00px;height:1.20px;background:#999"></div><div style="left:17.09px;top:82.05px;width:10.00px;height:1.20px;background:#999"></div><div style="left:42.27px;top:82.05px;width:4.00px;height:1.20px;background:#aaa"></div><div style="left:50.37px;top:82.05px;width:1.50px;height:1.20px;background:#aaa"></div><div style="left:67.36px;top:82.05px;width:4.50px;height:1.20px;background:#aaa"></div><div style="left:102.07px;top:82.05px;width:4.50px;height:1.20px;background:#aaa"></div><div style="left:5.72px;top:84.45px;width:2.00px;height:1.20px;background:#888"></div><div style="left:9.25px;top:84.45px;width:6.00px;height:1.20px;background:#999"></div><div style="left:17.09px;top:84.45px;width:10.00px;height:1.20px;background:#999"></div><div style="left:42.27px;top:84.45px;width:4.00px;height:1.20px;background:#aaa"></div><div style="left:50.37px;top:84.45px;width:1.50px;height:1.20px;background:#aaa"></div><div style="left:67.36px;top:84.45px;width:4.50px;height:1.20px;background:#aaa"></div><div style="left:102.07px;top:84.45px;width:4.50px;height:1.20px;background:#aaa"></div><div style="left:5.72px;top:86.86px;width:2.00px;height:1.20px;background:#888"></div><div style="left:9.25px;top:86.86px;width:6.00px;height:1.20px;background:#999"></div><div style="left:17.09px;top:86.86px;width:10.00px;height:1.20px;background:#999"></div><div style="left:42.27px;top:86.86px;width:4.00px;height:1.20px;background:#aaa"></div><div style="left:50.37px;top:86.86px;width:1.50px;height:1.20px;background:#aaa"></div><div style="left:67.36px;top:86.86px;width:4.50px;height:1.20px;background:#aaa"></div><div style="left:102.07px;top:86.86px;width:4.50px;height:1.20px;background:#aaa"></div><div style="left:5.72px;top:89.96px;width:2.00px;height:1.20px;background:#888"></div><div style="left:9.25px;top:89.96px;width:6.00px;height:1.20px;background:#999"></div><div style="left:17.09px;top:89.96px;width:10.00px;height:1.20px;background:#999"></div><div style="left:42.27px;top:89.96px;width:4.00px;height:1.20px;background:#aaa"></div><div style="left:50.37px;top:89.96px;width:1.50px;height:1.20px;background:#aaa"></div><div style="left:67.36px;top:89.96px;width:4.50px;height:1.20px;background:#aaa"></div><div style="left:102.07px;top:89.96px;width:4.50px;height:1.20px;background:#aaa"></div><div style="left:5.72px;top:93.06px;width:2.00px;height:1.20px;background:#888"></div><div style="left:9.25px;top:93.06px;width:6.00px;height:1.20px;background:#999"></div><div style="left:17.09px;top:93.06px;width:10.00px;height:1.20px;background:#999"></div><div style="left:42.27px;top:93.06px;width:4.00px;height:1.20px;background:#aaa"></div><div style="left:50.37px;top:93.06px;width:1.50px;height:1.20px;background:#aaa"></div><div style="left:67.36px;top:93.06px;width:4.50px;height:1.20px;background:#aaa"></div><div style="left:102.07px;top:93.06px;width:4.50px;height:1.20px;background:#aaa"></div><div style="left:4.22px;top:18.01px;width:132.52px;height:1.00px;background:#000"></div><div style="left:46.77px;top:22.59px;width:51.29px;height:1.00px;background:#000"></div><div style="left:4.22px;top:27.17px;width:132.52px;height:1.00px;background:#000"></div><div style="left:4.22px;top:29.57px;width:132.52px;height:1.00px;background:#000"></div><div style="left:4.22px;top:33.34px;width:132.52px;height:1.00px;background:#000"></div><div style="left:4.22px;top:35.74px;width:132.52px;height:1.00px;background:#000"></div><div style="left:4.22px;top:38.15px;width:132.52px;height:1.00px;background:#000"></div><div style="left:4.22px;top:40.55px;width:132.52px;height:1.00px;background:#000"></div><div style="left:4.22px;top:42.95px;width:132.52px;height:1.00px;background:#000"></div><div style="left:4.22px;top:45.35px;width:132.52px;height:1.00px;background:#000"></div><div style="left:4.22px;top:47.75px;width:132.52px;height:1.00px;background:#000"></div><div style="left:4.22px;top:50.15px;width:132.52px;height:1.00px;background:#000"></div><div style="left:4.22px;top:52.55px;width:132.52px;height:1.00px;background:#000"></div><div style="left:4.22px;top:54.95px;width:132.52px;height:1.00px;background:#000"></div><div style="left:4.22px;top:57.35px;width:132.52px;height:1.00px;background:#000"></div><div style="left:4.22px;top:59.75px;width:132.52px;height:1.00px;background:#000"></div><div style="left:4.22px;top:62.15px;width:132.52px;height:1.00px;background:#000"></div><div style="left:4.22px;top:64.55px;width:132.52px;height:1.00px;background:#000"></div><div style="left:4.22px;top:66.95px;width:132.52px;height:1.00px;background:#000"></div><div style="left:4.22px;top:69.35px;width:132.52px;height:1.00px;background:#000"></div><div style="left:4.22px;top:71.75px;width:132.52px;height:1.00px;background:#000"></div><div style="left:4.22px;top:74.15px;width:132.52px;height:1.00px;background:#000"></div><div style="left:4.22px;top:76.55px;width:132.52px;height:1.00px;background:#000"></div><div style="left:4.22px;top:78.95px;width:132.52px;height:1.00px;background:#000"></div><div style="left:4.22px;top:81.35px;width:132.52px;height:1.00px;background:#000"></div><div style="left:4.22px;top:83.75px;width:132.52px;height:1.00px;background:#000"></div><div style="left:4.22px;top:86.16px;width:132.52px;height:1.00px;background:#000"></div><div style="left:4.22px;top:88.56px;width:132.52px;height:1.00px;background:#000"></div><div style="left:4.22px;top:92.36px;width:132.52px;height:1.00px;background:#000"></div><div style="left:4.22px;top:94.76px;width:132.52px;height:1.00px;background:#000"></div><div style="left:4.12px;top:18.01px;width:1.20px;height:77.76px;background:#000"></div><div style="left:8.65px;top:18.01px;width:1.20px;height:77.76px;background:#000"></div><div style="left:16.49px;top:18.01px;width:1.20px;height:77.76px;background:#000"></div><div style="left:32.30px;top:18.01px;width:1.20px;height:77.76px;background:#000"></div><div style="left:46.67px;top:18.01px;width:1.20px;height:77.76px;background:#000"></div><div style="left:52.37px;top:22.59px;width:1.00px;height:73.17px;background:#000"></div><div style="left:58.02px;top:22.59px;width:1.00px;height:73.17px;background:#000"></div><div style="left:72.26px;top:18.01px;width:1.20px;height:77.76px;background:#000"></div><div style="left:78.03px;top:22.59px;width:1.00px;height:73.17px;background:#000"></div><div style="left:83.68px;top:22.59px;width:1.00px;height:73.17px;background:#000"></div><div style="left:97.96px;top:18.01px;width:1.20px;height:77.76px;background:#000"></div><div style="left:106.97px;top:18.01px;width:1.20px;height:77.76px;background:#000"></div><div style="left:121.39px;top:18.01px;width:1.20px;height:77.76px;background:#000"></div><div style="left:135.65px;top:18.01px;width:1.20px;height:77.76px;background:#000"></div><div style="left:69.71px;top:96.73px;width:1.00px;height:1.20px;background:#bbb"></div><div style="left:0;top:0;width:140px;height:102px;background:rgba(50,54,57,.47)"></div></div>
</div>
<div class="sb" style="left:284px;top:105px;width:17px;height:686px">
  <div class="abs" style="left:0;top:0;width:15px;height:17px;background:linear-gradient(#e4e4e4,#f1f1f1)"></div>
  <svg class="abs" style="left:3.5px;top:7px" width="8" height="5"><path d="M0 4.5 L4 0 L8 4.5 Z" fill="#a3a3a3"/></svg>
  <div class="abs" style="left:1px;top:17px;width:13px;height:28px;background:#c1c1c1"></div>
  <svg class="abs" style="left:3.5px;top:676px" width="8" height="5"><path d="M0 0 L4 4.3 L8 0 Z" fill="#505050"/></svg>
</div>

<!-- CONTENT -->
<div id="content"></div>
<div id="page">
<div class="pt" style="left:31px;top:33px;font-size:13.5px;line-height:16px">PHÒNG GIÁO DỤC VÀ ĐÀO TẠO QUẬN HAI BÀ TRƯNG</div>
<div class="pt" style="left:31px;top:57px;font-size:13.5px;font-weight:bold;line-height:16px">TRƯỜNG TIỂU HỌC TÂY SƠN</div>
<div class="pt" style="left:0;width:968px;text-align:center;top:79px;font-size:16.5px;font-weight:bold;line-height:18px;padding-left:0">DANH SÁCH THU TIỀN</div>
<div class="pt" style="left:0;width:968px;text-align:center;top:102px;font-size:13.55px;line-height:17px">Đợt thu: Đợt 1 tháng 05/2022 - Lớp: 1A1</div>
<div style="left:29.2px;top:122.5px;width:909.4px;height:62.3px;background:#d3d3d3"></div>
<div class="th up" style="left:29.2px;top:122.5px;width:31.3px;height:62.3px">Số<br>TT</div>
<div class="th up" style="left:60.5px;top:122.5px;width:54.2px;height:62.3px">Mã học<br>sinh</div>
<div class="th up" style="left:114.7px;top:122.5px;width:109.3px;height:62.3px">Họ và tên học sinh</div>
<div class="th up" style="left:224px;top:122.5px;width:99.4px;height:62.3px">Học 2 buổi/ngày</div>
<div class="th" style="left:323.4px;top:122.5px;width:176.9px;height:31.2px">Tiền ăn bán trú</div>
<div class="th" style="left:500.3px;top:122.5px;width:177.7px;height:31.2px">Sữa học đường</div>
<div class="th" style="left:323.4px;top:153.7px;width:38.7px;height:31.1px">Đăng<br>ký</div>
<div class="th" style="left:362.1px;top:153.7px;width:39.1px;height:31.1px">Tồn sử<br>dụng</div>
<div class="th" style="left:401.2px;top:153.7px;width:99.1px;height:31.1px">Số tiền</div>
<div class="th" style="left:500.3px;top:153.7px;width:39.2px;height:31.1px">Đăng<br>ký</div>
<div class="th" style="left:539.5px;top:153.7px;width:39.1px;height:31.1px">Tồn sử<br>dụng</div>
<div class="th" style="left:578.6px;top:153.7px;width:99.4px;height:31.1px">Số tiền</div>
<div class="th up" style="left:678px;top:122.5px;width:62.3px;height:62.3px">Tổng số tiền</div>
<div class="th up" style="left:740.3px;top:122.5px;width:99.7px;height:62.3px">Số đã thu</div>
<div class="th up" style="left:840px;top:122.5px;width:98.6px;height:62.3px">Ghi chú</div>
<div class="stt" style="left:29.2px;top:184.8px;width:31.3px;height:16.33px">1</div>
<div class="tl" style="left:60.5px;top:184.8px;width:54.2px;height:16.33px">83rqxmxv</div>
<div class="tl nm" style="left:114.7px;top:184.8px;width:109.3px;height:16.33px">Đỗ Nhi Anh</div>
<div class="nr" style="left:224px;top:184.8px;width:99.4px;height:16.33px">75.000</div>
<div class="nr" style="left:323.4px;top:184.8px;width:38.7px;height:16.33px">14</div>
<div class="nr" style="left:401.2px;top:184.8px;width:99.1px;height:16.33px">420.000</div>
<div class="nr" style="left:678px;top:184.8px;width:62.3px;height:16.33px">495.000</div>
<div class="stt" style="left:29.2px;top:201.13px;width:31.3px;height:25.7px">2</div>
<div class="tl" style="left:60.5px;top:201.13px;width:54.2px;height:25.7px">8zvkn551</div>
<div class="tl nm" style="left:114.7px;top:201.13px;width:109.3px;height:25.7px">Nguyễn Đăng Quang<br>Anh</div>
<div class="nr" style="left:224px;top:201.13px;width:99.4px;height:25.7px">75.000</div>
<div class="nr" style="left:678px;top:201.13px;width:62.3px;height:25.7px">75.000</div>
<div class="stt" style="left:29.2px;top:226.83px;width:31.3px;height:16.33px">3</div>
<div class="tl" style="left:60.5px;top:226.83px;width:54.2px;height:16.33px">83rqxlje</div>
<div class="tl nm" style="left:114.7px;top:226.83px;width:109.3px;height:16.33px">Nguyễn Minh Anh</div>
<div class="nr" style="left:224px;top:226.83px;width:99.4px;height:16.33px">75.000</div>
<div class="nr" style="left:323.4px;top:226.83px;width:38.7px;height:16.33px">14</div>
<div class="nr" style="left:401.2px;top:226.83px;width:99.1px;height:16.33px">420.000</div>
<div class="nr" style="left:678px;top:226.83px;width:62.3px;height:16.33px">495.000</div>
<div class="stt" style="left:29.2px;top:243.16px;width:31.3px;height:16.33px">4</div>
<div class="tl" style="left:60.5px;top:243.16px;width:54.2px;height:16.33px">8v0y59m1</div>
<div class="tl nm" style="left:114.7px;top:243.16px;width:109.3px;height:16.33px">Vũ Vi Anh</div>
<div class="nr" style="left:224px;top:243.16px;width:99.4px;height:16.33px">75.000</div>
<div class="nr" style="left:323.4px;top:243.16px;width:38.7px;height:16.33px">14</div>
<div class="nr" style="left:401.2px;top:243.16px;width:99.1px;height:16.33px">420.000</div>
<div class="nr" style="left:678px;top:243.16px;width:62.3px;height:16.33px">495.000</div>
<div class="stt" style="left:29.2px;top:259.49px;width:31.3px;height:16.33px">5</div>
<div class="tl" style="left:60.5px;top:259.49px;width:54.2px;height:16.33px">6q9mgqdn</div>
<div class="tl nm" style="left:114.7px;top:259.49px;width:109.3px;height:16.33px">Nguyễn Nhật Ánh</div>
<div class="nr" style="left:224px;top:259.49px;width:99.4px;height:16.33px">75.000</div>
<div class="nr" style="left:678px;top:259.49px;width:62.3px;height:16.33px">75.000</div>
<div class="stt" style="left:29.2px;top:275.82px;width:31.3px;height:16.33px">6</div>
<div class="tl" style="left:60.5px;top:275.82px;width:54.2px;height:16.33px">6geon90v</div>
<div class="tl nm" style="left:114.7px;top:275.82px;width:109.3px;height:16.33px">Đỗ Gia Bảo</div>
<div class="nr" style="left:224px;top:275.82px;width:99.4px;height:16.33px">75.000</div>
<div class="nr" style="left:323.4px;top:275.82px;width:38.7px;height:16.33px">14</div>
<div class="nr" style="left:401.2px;top:275.82px;width:99.1px;height:16.33px">420.000</div>
<div class="nr" style="left:678px;top:275.82px;width:62.3px;height:16.33px">495.000</div>
<div class="stt" style="left:29.2px;top:292.15px;width:31.3px;height:16.33px">7</div>
<div class="tl" style="left:60.5px;top:292.15px;width:54.2px;height:16.33px">691m9vpg</div>
<div class="tl nm" style="left:114.7px;top:292.15px;width:109.3px;height:16.33px">Lê Gia Bảo</div>
<div class="nr" style="left:224px;top:292.15px;width:99.4px;height:16.33px">75.000</div>
<div class="nr" style="left:323.4px;top:292.15px;width:38.7px;height:16.33px">14</div>
<div class="nr" style="left:401.2px;top:292.15px;width:99.1px;height:16.33px">420.000</div>
<div class="nr" style="left:678px;top:292.15px;width:62.3px;height:16.33px">495.000</div>
<div class="stt" style="left:29.2px;top:308.48px;width:31.3px;height:16.33px">8</div>
<div class="tl" style="left:60.5px;top:308.48px;width:54.2px;height:16.33px">8zvkn4vj</div>
<div class="tl nm" style="left:114.7px;top:308.48px;width:109.3px;height:16.33px">Nguyễn Quang Bảo</div>
<div class="nr" style="left:224px;top:308.48px;width:99.4px;height:16.33px">75.000</div>
<div class="nr" style="left:323.4px;top:308.48px;width:38.7px;height:16.33px">14</div>
<div class="nr" style="left:401.2px;top:308.48px;width:99.1px;height:16.33px">420.000</div>
<div class="nr" style="left:678px;top:308.48px;width:62.3px;height:16.33px">495.000</div>
<div class="stt" style="left:29.2px;top:324.81px;width:31.3px;height:16.33px">9</div>
<div class="tl" style="left:60.5px;top:324.81px;width:54.2px;height:16.33px">8zvkn4vx</div>
<div class="tl nm" style="left:114.7px;top:324.81px;width:109.3px;height:16.33px">Trần Ngọc Gia Bảo</div>
<div class="nr" style="left:224px;top:324.81px;width:99.4px;height:16.33px">75.000</div>
<div class="nr" style="left:323.4px;top:324.81px;width:38.7px;height:16.33px">14</div>
<div class="nr" style="left:401.2px;top:324.81px;width:99.1px;height:16.33px">420.000</div>
<div class="nr" style="left:678px;top:324.81px;width:62.3px;height:16.33px">495.000</div>
<div class="stt" style="left:29.2px;top:341.14px;width:31.3px;height:16.33px">10</div>
<div class="tl" style="left:60.5px;top:341.14px;width:54.2px;height:16.33px">82qj39wo</div>
<div class="tl nm" style="left:114.7px;top:341.14px;width:109.3px;height:16.33px">Nguyễn Khánh Chi</div>
<div class="nr" style="left:224px;top:341.14px;width:99.4px;height:16.33px">75.000</div>
<div class="nr" style="left:323.4px;top:341.14px;width:38.7px;height:16.33px">14</div>
<div class="nr" style="left:401.2px;top:341.14px;width:99.1px;height:16.33px">420.000</div>
<div class="nr" style="left:678px;top:341.14px;width:62.3px;height:16.33px">495.000</div>
<div class="stt" style="left:29.2px;top:357.47px;width:31.3px;height:16.33px">11</div>
<div class="tl" style="left:60.5px;top:357.47px;width:54.2px;height:16.33px">60o3zg3p</div>
<div class="tl nm" style="left:114.7px;top:357.47px;width:109.3px;height:16.33px">Phạm Tiến Đạt</div>
<div class="nr" style="left:224px;top:357.47px;width:99.4px;height:16.33px">75.000</div>
<div class="nr" style="left:323.4px;top:357.47px;width:38.7px;height:16.33px">14</div>
<div class="nr" style="left:401.2px;top:357.47px;width:99.1px;height:16.33px">420.000</div>
<div class="nr" style="left:678px;top:357.47px;width:62.3px;height:16.33px">495.000</div>
<div class="stt" style="left:29.2px;top:373.8px;width:31.3px;height:16.33px">12</div>
<div class="tl" style="left:60.5px;top:373.8px;width:54.2px;height:16.33px">8jrod0ol</div>
<div class="tl nm" style="left:114.7px;top:373.8px;width:109.3px;height:16.33px">Đinh Tiến Dũng</div>
<div class="nr" style="left:224px;top:373.8px;width:99.4px;height:16.33px">75.000</div>
<div class="nr" style="left:323.4px;top:373.8px;width:38.7px;height:16.33px">14</div>
<div class="nr" style="left:401.2px;top:373.8px;width:99.1px;height:16.33px">420.000</div>
<div class="nr" style="left:678px;top:373.8px;width:62.3px;height:16.33px">495.000</div>
<div class="stt" style="left:29.2px;top:390.13px;width:31.3px;height:16.33px">13</div>
<div class="tl" style="left:60.5px;top:390.13px;width:54.2px;height:16.33px">7knx35wq</div>
<div class="tl nm" style="left:114.7px;top:390.13px;width:109.3px;height:16.33px">Nguyễn Anh Duy</div>
<div class="nr" style="left:224px;top:390.13px;width:99.4px;height:16.33px">75.000</div>
<div class="nr" style="left:323.4px;top:390.13px;width:38.7px;height:16.33px">14</div>
<div class="nr" style="left:401.2px;top:390.13px;width:99.1px;height:16.33px">420.000</div>
<div class="nr" style="left:678px;top:390.13px;width:62.3px;height:16.33px">495.000</div>
<div class="stt" style="left:29.2px;top:406.46px;width:31.3px;height:16.33px">14</div>
<div class="tl" style="left:60.5px;top:406.46px;width:54.2px;height:16.33px">8p9mjxrd</div>
<div class="tl nm" style="left:114.7px;top:406.46px;width:109.3px;height:16.33px">Vương Trường Giang</div>
<div class="nr" style="left:224px;top:406.46px;width:99.4px;height:16.33px">75.000</div>
<div class="nr" style="left:323.4px;top:406.46px;width:38.7px;height:16.33px">14</div>
<div class="nr" style="left:401.2px;top:406.46px;width:99.1px;height:16.33px">420.000</div>
<div class="nr" style="left:678px;top:406.46px;width:62.3px;height:16.33px">495.000</div>
<div class="stt" style="left:29.2px;top:422.79px;width:31.3px;height:16.33px">15</div>
<div class="tl" style="left:60.5px;top:422.79px;width:54.2px;height:16.33px">6q9mgq4n</div>
<div class="tl nm" style="left:114.7px;top:422.79px;width:109.3px;height:16.33px">Nguyễn Gia Hiếu</div>
<div class="nr" style="left:224px;top:422.79px;width:99.4px;height:16.33px">75.000</div>
<div class="nr" style="left:323.4px;top:422.79px;width:38.7px;height:16.33px">14</div>
<div class="nr" style="left:401.2px;top:422.79px;width:99.1px;height:16.33px">420.000</div>
<div class="nr" style="left:678px;top:422.79px;width:62.3px;height:16.33px">495.000</div>
<div class="stt" style="left:29.2px;top:439.12px;width:31.3px;height:16.33px">16</div>
<div class="tl" style="left:60.5px;top:439.12px;width:54.2px;height:16.33px">7ng2kv2d</div>
<div class="tl nm" style="left:114.7px;top:439.12px;width:109.3px;height:16.33px">Ngô Duy Hưng</div>
<div class="nr" style="left:224px;top:439.12px;width:99.4px;height:16.33px">75.000</div>
<div class="nr" style="left:323.4px;top:439.12px;width:38.7px;height:16.33px">14</div>
<div class="nr" style="left:401.2px;top:439.12px;width:99.1px;height:16.33px">420.000</div>
<div class="nr" style="left:678px;top:439.12px;width:62.3px;height:16.33px">495.000</div>
<div class="stt" style="left:29.2px;top:455.45px;width:31.3px;height:16.33px">17</div>
<div class="tl" style="left:60.5px;top:455.45px;width:54.2px;height:16.33px">6r1w94m5</div>
<div class="tl nm" style="left:114.7px;top:455.45px;width:109.3px;height:16.33px">Nguyễn Ngọc Hưng</div>
<div class="nr" style="left:224px;top:455.45px;width:99.4px;height:16.33px">75.000</div>
<div class="nr" style="left:323.4px;top:455.45px;width:38.7px;height:16.33px">14</div>
<div class="nr" style="left:401.2px;top:455.45px;width:99.1px;height:16.33px">420.000</div>
<div class="nr" style="left:678px;top:455.45px;width:62.3px;height:16.33px">495.000</div>
<div class="stt" style="left:29.2px;top:471.78px;width:31.3px;height:16.33px">18</div>
<div class="tl" style="left:60.5px;top:471.78px;width:54.2px;height:16.33px">6geon4jg</div>
<div class="tl nm" style="left:114.7px;top:471.78px;width:109.3px;height:16.33px">Đoàn Trần Gia Huy</div>
<div class="nr" style="left:224px;top:471.78px;width:99.4px;height:16.33px">75.000</div>
<div class="nr" style="left:323.4px;top:471.78px;width:38.7px;height:16.33px">14</div>
<div class="nr" style="left:401.2px;top:471.78px;width:99.1px;height:16.33px">420.000</div>
<div class="nr" style="left:678px;top:471.78px;width:62.3px;height:16.33px">495.000</div>
<div class="stt" style="left:29.2px;top:488.11px;width:31.3px;height:16.33px">19</div>
<div class="tl" style="left:60.5px;top:488.11px;width:54.2px;height:16.33px">6449qlqw</div>
<div class="tl nm" style="left:114.7px;top:488.11px;width:109.3px;height:16.33px">Trần Minh Khôi</div>
<div class="nr" style="left:224px;top:488.11px;width:99.4px;height:16.33px">75.000</div>
<div class="nr" style="left:323.4px;top:488.11px;width:38.7px;height:16.33px">14</div>
<div class="nr" style="left:401.2px;top:488.11px;width:99.1px;height:16.33px">420.000</div>
<div class="nr" style="left:678px;top:488.11px;width:62.3px;height:16.33px">495.000</div>
<div class="stt" style="left:29.2px;top:504.44px;width:31.3px;height:16.33px">20</div>
<div class="tl" style="left:60.5px;top:504.44px;width:54.2px;height:16.33px">8v0y59ro</div>
<div class="tl nm" style="left:114.7px;top:504.44px;width:109.3px;height:16.33px">Nguyễn Trần Kiên</div>
<div class="nr" style="left:224px;top:504.44px;width:99.4px;height:16.33px">75.000</div>
<div class="nr" style="left:323.4px;top:504.44px;width:38.7px;height:16.33px">14</div>
<div class="nr" style="left:401.2px;top:504.44px;width:99.1px;height:16.33px">420.000</div>
<div class="nr" style="left:678px;top:504.44px;width:62.3px;height:16.33px">495.000</div>
<div class="stt" style="left:29.2px;top:520.77px;width:31.3px;height:16.33px">21</div>
<div class="tl" style="left:60.5px;top:520.77px;width:54.2px;height:16.33px">8jrod0r5</div>
<div class="tl nm" style="left:114.7px;top:520.77px;width:109.3px;height:16.33px">Nguyễn Tuấn Kiệt</div>
<div class="nr" style="left:224px;top:520.77px;width:99.4px;height:16.33px">75.000</div>
<div class="nr" style="left:323.4px;top:520.77px;width:38.7px;height:16.33px">14</div>
<div class="nr" style="left:401.2px;top:520.77px;width:99.1px;height:16.33px">420.000</div>
<div class="nr" style="left:678px;top:520.77px;width:62.3px;height:16.33px">495.000</div>
<div class="stt" style="left:29.2px;top:537.1px;width:31.3px;height:16.33px">22</div>
<div class="tl" style="left:60.5px;top:537.1px;width:54.2px;height:16.33px">6o4j23we</div>
<div class="tl nm" style="left:114.7px;top:537.1px;width:109.3px;height:16.33px">Nguyễn Ngọc Tuệ Mẫn</div>
<div class="nr" style="left:224px;top:537.1px;width:99.4px;height:16.33px">75.000</div>
<div class="nr" style="left:323.4px;top:537.1px;width:38.7px;height:16.33px">14</div>
<div class="nr" style="left:401.2px;top:537.1px;width:99.1px;height:16.33px">420.000</div>
<div class="nr" style="left:678px;top:537.1px;width:62.3px;height:16.33px">495.000</div>
<div class="stt" style="left:29.2px;top:553.43px;width:31.3px;height:16.33px">23</div>
<div class="tl" style="left:60.5px;top:553.43px;width:54.2px;height:16.33px">8zvkn4xx</div>
<div class="tl nm" style="left:114.7px;top:553.43px;width:109.3px;height:16.33px">Nguyễn Quang Minh</div>
<div class="nr" style="left:224px;top:553.43px;width:99.4px;height:16.33px">75.000</div>
<div class="nr" style="left:323.4px;top:553.43px;width:38.7px;height:16.33px">14</div>
<div class="nr" style="left:401.2px;top:553.43px;width:99.1px;height:16.33px">420.000</div>
<div class="nr" style="left:678px;top:553.43px;width:62.3px;height:16.33px">495.000</div>
<div class="stt" style="left:29.2px;top:569.76px;width:31.3px;height:16.33px">24</div>
<div class="tl" style="left:60.5px;top:569.76px;width:54.2px;height:16.33px">82qj31e4</div>
<div class="tl nm" style="left:114.7px;top:569.76px;width:109.3px;height:16.33px">Phạm Thiên Minh</div>
<div class="nr" style="left:224px;top:569.76px;width:99.4px;height:16.33px">75.000</div>
<div class="nr" style="left:323.4px;top:569.76px;width:38.7px;height:16.33px">14</div>
<div class="nr" style="left:401.2px;top:569.76px;width:99.1px;height:16.33px">420.000</div>
<div class="nr" style="left:678px;top:569.76px;width:62.3px;height:16.33px">495.000</div>
<div class="stt" style="left:29.2px;top:586.09px;width:31.3px;height:16.33px">25</div>
<div class="tl" style="left:60.5px;top:586.09px;width:54.2px;height:16.33px">81mrdgno</div>
<div class="tl nm" style="left:114.7px;top:586.09px;width:109.3px;height:16.33px">Trần Gia Minh</div>
<div class="nr" style="left:224px;top:586.09px;width:99.4px;height:16.33px">75.000</div>
<div class="nr" style="left:323.4px;top:586.09px;width:38.7px;height:16.33px">14</div>
<div class="nr" style="left:401.2px;top:586.09px;width:99.1px;height:16.33px">420.000</div>
<div class="nr" style="left:678px;top:586.09px;width:62.3px;height:16.33px">495.000</div>
<div class="stt" style="left:29.2px;top:602.42px;width:31.3px;height:25.9px">26</div>
<div class="tl" style="left:60.5px;top:602.42px;width:54.2px;height:25.9px">7ng2kvnd</div>
<div class="tl nm" style="left:114.7px;top:602.42px;width:109.3px;height:25.9px">Nguyễn Duy Trung<br>Nghĩa</div>
<div class="nr" style="left:224px;top:602.42px;width:99.4px;height:25.9px">75.000</div>
<div class="nr" style="left:323.4px;top:602.42px;width:38.7px;height:25.9px">14</div>
<div class="nr" style="left:401.2px;top:602.42px;width:99.1px;height:25.9px">420.000</div>
<div class="nr" style="left:678px;top:602.42px;width:62.3px;height:25.9px">495.000</div>
<div class="stt" style="left:29.2px;top:628.32px;width:31.3px;height:16.33px">27</div>
<div class="tl" style="left:60.5px;top:628.32px;width:54.2px;height:16.33px">6r1w9kk0</div>
<div class="tl nm" style="left:114.7px;top:628.32px;width:109.3px;height:16.33px">Vũ Nam Nguyên</div>
<div class="nr" style="left:224px;top:628.32px;width:99.4px;height:16.33px">75.000</div>
<div class="nr" style="left:323.4px;top:628.32px;width:38.7px;height:16.33px">14</div>
<div class="nr" style="left:401.2px;top:628.32px;width:99.1px;height:16.33px">420.000</div>
<div class="nr" style="left:678px;top:628.32px;width:62.3px;height:16.33px">495.000</div>
<svg style="position:absolute;left:0;top:0;overflow:visible" width="968" height="683"><g stroke="#000" fill="none"><line x1="28.55" y1="122.50" x2="939.25" y2="122.50" stroke-width="1.3"/><line x1="323.40" y1="153.70" x2="678.00" y2="153.70" stroke-width="1.3"/><line x1="28.55" y1="184.90" x2="939.25" y2="184.90" stroke-width="1.8"/><line x1="28.55" y1="201.13" x2="939.25" y2="201.13" stroke-width="1.4"/><line x1="28.55" y1="226.83" x2="939.25" y2="226.83" stroke-width="1.4"/><line x1="28.55" y1="243.16" x2="939.25" y2="243.16" stroke-width="1.4"/><line x1="28.55" y1="259.49" x2="939.25" y2="259.49" stroke-width="1.4"/><line x1="28.55" y1="275.82" x2="939.25" y2="275.82" stroke-width="1.4"/><line x1="28.55" y1="292.15" x2="939.25" y2="292.15" stroke-width="1.4"/><line x1="28.55" y1="308.48" x2="939.25" y2="308.48" stroke-width="1.4"/><line x1="28.55" y1="324.81" x2="939.25" y2="324.81" stroke-width="1.4"/><line x1="28.55" y1="341.14" x2="939.25" y2="341.14" stroke-width="1.4"/><line x1="28.55" y1="357.47" x2="939.25" y2="357.47" stroke-width="1.4"/><line x1="28.55" y1="373.80" x2="939.25" y2="373.80" stroke-width="1.4"/><line x1="28.55" y1="390.13" x2="939.25" y2="390.13" stroke-width="1.4"/><line x1="28.55" y1="406.46" x2="939.25" y2="406.46" stroke-width="1.4"/><line x1="28.55" y1="422.79" x2="939.25" y2="422.79" stroke-width="1.4"/><line x1="28.55" y1="439.12" x2="939.25" y2="439.12" stroke-width="1.4"/><line x1="28.55" y1="455.45" x2="939.25" y2="455.45" stroke-width="1.4"/><line x1="28.55" y1="471.78" x2="939.25" y2="471.78" stroke-width="1.4"/><line x1="28.55" y1="488.11" x2="939.25" y2="488.11" stroke-width="1.4"/><line x1="28.55" y1="504.44" x2="939.25" y2="504.44" stroke-width="1.4"/><line x1="28.55" y1="520.77" x2="939.25" y2="520.77" stroke-width="1.4"/><line x1="28.55" y1="537.10" x2="939.25" y2="537.10" stroke-width="1.4"/><line x1="28.55" y1="553.43" x2="939.25" y2="553.43" stroke-width="1.4"/><line x1="28.55" y1="569.76" x2="939.25" y2="569.76" stroke-width="1.4"/><line x1="28.55" y1="586.09" x2="939.25" y2="586.09" stroke-width="1.4"/><line x1="28.55" y1="602.42" x2="939.25" y2="602.42" stroke-width="1.4"/><line x1="28.55" y1="628.32" x2="939.25" y2="628.32" stroke-width="1.4"/><line x1="28.55" y1="644.65" x2="939.25" y2="644.65" stroke-width="1.4"/><line x1="29.20" y1="121.85" x2="29.20" y2="645.30" stroke-width="1.3"/><line x1="60.50" y1="121.85" x2="60.50" y2="645.30" stroke-width="1.3"/><line x1="114.70" y1="121.85" x2="114.70" y2="645.30" stroke-width="1.3"/><line x1="224.00" y1="121.85" x2="224.00" y2="645.30" stroke-width="1.3"/><line x1="323.40" y1="121.85" x2="323.40" y2="645.30" stroke-width="1.3"/><line x1="362.10" y1="153.70" x2="362.10" y2="644.65" stroke-width="1.3"/><line x1="401.20" y1="153.70" x2="401.20" y2="644.65" stroke-width="1.3"/><line x1="500.30" y1="121.85" x2="500.30" y2="645.30" stroke-width="1.3"/><line x1="539.50" y1="153.70" x2="539.50" y2="644.65" stroke-width="1.3"/><line x1="578.60" y1="153.70" x2="578.60" y2="644.65" stroke-width="1.3"/><line x1="678.00" y1="121.85" x2="678.00" y2="645.30" stroke-width="1.3"/><line x1="740.30" y1="121.85" x2="740.30" y2="645.30" stroke-width="1.3"/><line x1="840.00" y1="121.85" x2="840.00" y2="645.30" stroke-width="1.3"/><line x1="938.60" y1="121.85" x2="938.60" y2="645.30" stroke-width="1.3"/></g></svg>
<div class="pt" style="left:474px;width:20px;text-align:center;top:654px;font-size:12.7px;line-height:14px">1</div>
</div>
<div class="sb" style="left:1279px;top:105px;width:17px;height:686px">
  <div class="abs" style="left:0;top:0;width:15px;height:17px;background:linear-gradient(#e4e4e4,#f1f1f1)"></div>
  <svg class="abs" style="left:3.5px;top:7px" width="8" height="5"><path d="M0 4.5 L4 0 L8 4.5 Z" fill="#a3a3a3"/></svg>
  <div class="abs" style="left:1px;top:17px;width:13px;height:17px;background:#c1c1c1"></div>
  <svg class="abs" style="left:3.5px;top:676px" width="8" height="5"><path d="M0 0 L4 4.3 L8 0 Z" fill="#505050"/></svg>
</div>

<div class="abs" style="left:1px;top:105px;width:1294px;height:6px;background:linear-gradient(rgba(0,0,0,.28),rgba(0,0,0,0));z-index:6"></div>
<!-- DROPDOWN -->
<svg class="abs" style="left:1048px;top:44px;z-index:21" width="20" height="10" viewBox="0 0 20 10">
  <path d="M1 10 L10 1.5 L19 10 Z" fill="#fff"/>
</svg>
<div id="dd">
<div class="it" style="top:0px"><svg width="14" height="16" viewBox="0 0 14 16"><path d="M0.6 0.6 H9.4 L13.4 4.6 V15.4 H0.6 Z M9.4 0.9 V4.6 H13.1" fill="none" stroke="#f47a5c" stroke-width="1.15" stroke-linejoin="round"/><path d="M9.9 1.5 L12.5 4.1 H9.9 Z" fill="#f47a5c" opacity=".35"/><path d="M6.4 2.8 V8.4 M6.4 8.4 L2.6 12.6 M6.4 8.4 Q8.5 9.6 11.6 10.2" fill="none" stroke="#f47a5c" stroke-width="1.2" stroke-linecap="round"/><circle cx="6.4" cy="3" r="0.9" fill="#f47a5c"/><circle cx="2.7" cy="12.4" r="1" fill="#f47a5c"/><circle cx="11.2" cy="10.1" r="0.9" fill="#f47a5c"/></svg><span>Tệp PDF</span></div>
<div class="it" style="top:38px"><svg width="14" height="16" viewBox="0 0 14 16"><path d="M0.6 0.6 H9.4 L13.4 4.6 V15.4 H0.6 Z M9.4 0.9 V4.6 H13.1" fill="none" stroke="#2a86dc" stroke-width="1.15" stroke-linejoin="round"/><path d="M9.9 1.5 L12.5 4.1 H9.9 Z" fill="#2a86dc" opacity=".35"/><path d="M2.9 6.0 L4.5 12.7 L6.95 6.9 L9.4 12.7 L11.0 6.0" fill="none" stroke="#2a86dc" stroke-width="1.8" stroke-linejoin="round"/><path d="M2 6.2 H4.2 M9.7 6.2 H11.9 M5.9 6.2 H8" stroke="#2a86dc" stroke-width="0.9"/></svg><span>Tệp MS Word 2007/2010/2013</span></div>
<div class="it" style="top:70px"><svg width="14" height="16" viewBox="0 0 14 16"><path d="M0.6 0.6 H9.4 L13.4 4.6 V15.4 H0.6 Z M9.4 0.9 V4.6 H13.1" fill="none" stroke="#2a86dc" stroke-width="1.15" stroke-linejoin="round"/><path d="M9.9 1.5 L12.5 4.1 H9.9 Z" fill="#2a86dc" opacity=".35"/><path d="M2.9 6.0 L4.5 12.7 L6.95 6.9 L9.4 12.7 L11.0 6.0" fill="none" stroke="#2a86dc" stroke-width="1.8" stroke-linejoin="round"/><path d="M2 6.2 H4.2 M9.7 6.2 H11.9 M5.9 6.2 H8" stroke="#2a86dc" stroke-width="0.9"/></svg><span>Tệp MS Word 2003</span></div>
<div class="it" style="top:108px"><svg width="14" height="16" viewBox="0 0 14 16"><path d="M0.6 0.6 H9.4 L13.4 4.6 V15.4 H0.6 Z M9.4 0.9 V4.6 H13.1" fill="none" stroke="#45b86c" stroke-width="1.15" stroke-linejoin="round"/><path d="M9.9 1.5 L12.5 4.1 H9.9 Z" fill="#45b86c" opacity=".35"/><path d="M3.9 6.4 L10 13.2 M10 6.4 L3.9 13.2" fill="none" stroke="#45b86c" stroke-width="2.1"/><path d="M2.9 6.1 H5.3 M8.6 6.1 H11 M2.9 13.5 H5.3 M8.6 13.5 H11" stroke="#45b86c" stroke-width="0.9"/></svg><span>Tệp MS Excel 2007/2010/2013</span></div>
<div class="it" style="top:140px"><svg width="14" height="16" viewBox="0 0 14 16"><path d="M0.6 0.6 H9.4 L13.4 4.6 V15.4 H0.6 Z M9.4 0.9 V4.6 H13.1" fill="none" stroke="#45b86c" stroke-width="1.15" stroke-linejoin="round"/><path d="M9.9 1.5 L12.5 4.1 H9.9 Z" fill="#45b86c" opacity=".35"/><path d="M3.9 6.4 L10 13.2 M10 6.4 L3.9 13.2" fill="none" stroke="#45b86c" stroke-width="2.1"/><path d="M2.9 6.1 H5.3 M8.6 6.1 H11 M2.9 13.5 H5.3 M8.6 13.5 H11" stroke="#45b86c" stroke-width="0.9"/></svg><span>Tệp MS Excel 2003</span></div>
<div class="sep" style="top:34px"></div>
<div class="sep" style="top:104px"></div>
</div>
</body></html>
